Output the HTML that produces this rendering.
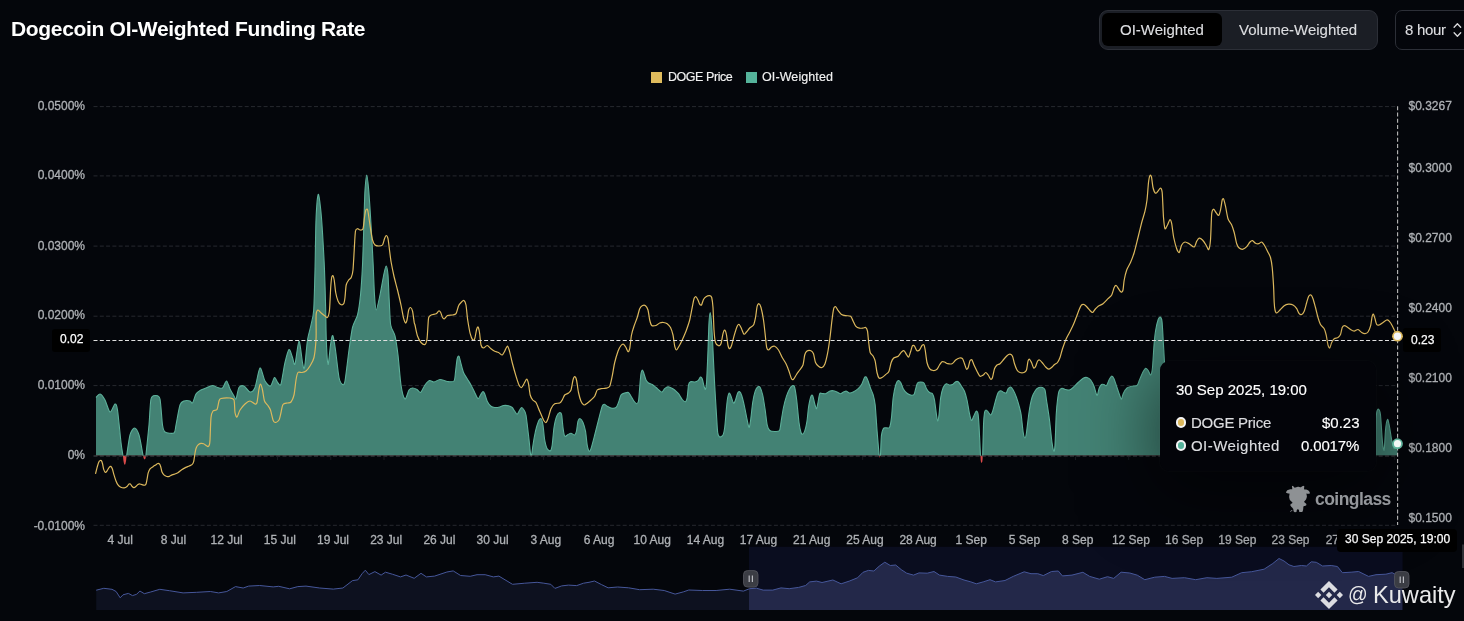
<!DOCTYPE html>
<html><head><meta charset="utf-8"><title>Dogecoin OI-Weighted Funding Rate</title>
<style>
html,body{margin:0;padding:0;background:#04060b;}
body{width:1464px;height:621px;overflow:hidden;position:relative;font-family:"Liberation Sans",sans-serif;}
svg text{font-family:"Liberation Sans",sans-serif;stroke:#aeb1b5;stroke-width:0.3px;}
.abs{position:absolute;white-space:nowrap;will-change:transform;}
#title{left:11px;top:17px;font-size:21px;line-height:24px;font-weight:bold;color:#fff;letter-spacing:-0.32px;}
#tg{left:1099px;top:10px;width:277px;height:37.5px;border:1px solid #2c2f37;border-radius:9px;background:#1b1e25;}
#tga{left:1102px;top:13px;width:119.5px;height:32.5px;border-radius:6px;background:#000;}
.tgt{top:19.6px;font-size:15px;line-height:19px;color:#dddee1;-webkit-text-stroke:0.12px #dddee1;margin-left:-0.4px;}
#dd{left:1395px;top:10px;width:80px;height:37.5px;border:1px solid #2c2f37;border-radius:7px;background:#04060b;}
.lg{top:70.3px;font-size:12.5px;line-height:15px;color:#f2f2f2;-webkit-text-stroke:0.15px #f2f2f2;}
.sq{position:absolute;top:72px;width:11px;height:11px;}
#pl{left:52px;top:329px;width:38px;height:23px;border-radius:3px;background:#000;}
#pr{left:1403px;top:328px;width:38px;height:24px;border-radius:3px;background:#000;}
.pt{font-size:12px;line-height:14px;color:#fff;-webkit-text-stroke:0.25px #fff;letter-spacing:0px;}
#pb{left:1337px;top:529px;width:120px;height:23px;border-radius:4px;background:#000;}
#tip{left:1160px;top:361px;width:215.5px;height:110px;border-radius:9px;background:#030409;box-shadow:0 0 0 1px rgba(255,255,255,0.012), 0 18px 70px 8px rgba(0,0,0,0.5);}
.tt{font-size:15px;line-height:18px;color:#fff;-webkit-text-stroke:0.15px #fff;}
.tl{font-size:15px;line-height:18px;color:#dcdde0;-webkit-text-stroke:0.15px #dcdde0;}
.dot{position:absolute;width:6.6px;height:6.6px;border-radius:50%;border:2px solid #f4f4f4;}
#cg{left:1315px;top:487.5px;font-size:17.5px;line-height:22px;font-weight:bold;color:#94979b;letter-spacing:-0.55px;}
#wm{left:1348px;top:580.8px;font-size:23.6px;line-height:28px;color:#e9e9ea;}
</style></head><body>
<svg width="1464" height="621" viewBox="0 0 1464 621" style="position:absolute;left:0;top:0;will-change:transform">
<defs><clipPath id="cpos"><rect x="90" y="100" width="1320" height="355.8"/></clipPath><clipPath id="cneg"><rect x="90" y="455.8" width="1320" height="60"/></clipPath>
<clipPath id="csel"><rect x="749" y="546.8" width="653.6" height="63.1"/></clipPath>
<linearGradient id="tsh" x1="0" x2="1" y1="0" y2="0"><stop offset="0" stop-color="#000" stop-opacity="0"/><stop offset="1" stop-color="#000" stop-opacity="0.22"/></linearGradient>
</defs>
<line x1="93.5" x2="1397.5" y1="106.6" y2="106.6" stroke="#27292f" stroke-width="1" stroke-dasharray="4 2.3"/>
<line x1="93.5" x2="1397.5" y1="175.9" y2="175.9" stroke="#27292f" stroke-width="1" stroke-dasharray="4 2.3"/>
<line x1="93.5" x2="1397.5" y1="246.1" y2="246.1" stroke="#27292f" stroke-width="1" stroke-dasharray="4 2.3"/>
<line x1="93.5" x2="1397.5" y1="316.2" y2="316.2" stroke="#27292f" stroke-width="1" stroke-dasharray="4 2.3"/>
<line x1="93.5" x2="1397.5" y1="385.6" y2="385.6" stroke="#27292f" stroke-width="1" stroke-dasharray="4 2.3"/>
<line x1="93.5" x2="1397.5" y1="525.3" y2="525.3" stroke="#27292f" stroke-width="1" stroke-dasharray="4 2.3"/>
<g clip-path="url(#cpos)"><path d="M96.0 397.5C96.5 397.0 98.8 393.7 100.0 394.0C101.2 394.3 103.7 397.6 105.0 400.0C106.3 402.4 108.7 411.5 110.0 412.0C111.3 412.5 114.0 404.3 115.0 404.0C116.0 403.7 116.7 404.9 117.5 410.0C118.3 415.1 120.3 436.4 121.0 442.5C121.7 448.6 122.6 453.0 122.9 455.5C123.2 458.0 123.3 459.8 123.5 461.0C123.7 462.2 124.1 464.2 124.4 464.6C124.7 465.0 125.2 464.6 125.4 464.0C125.6 463.4 126.0 461.1 126.2 460.0C126.4 458.9 126.2 458.8 126.7 455.5C127.2 452.2 129.0 438.7 130.0 435.0C131.0 431.3 133.3 428.0 134.5 428.0C135.7 428.0 137.9 431.7 139.0 435.0C140.1 438.3 142.0 449.8 142.5 452.5C143.0 455.2 142.9 454.7 143.1 455.5C143.3 456.3 143.6 458.1 143.8 458.6C144.0 459.1 144.4 459.4 144.6 459.4C144.8 459.4 145.2 458.9 145.4 458.4C145.6 457.9 145.4 460.0 145.9 455.5C146.4 451.0 148.3 432.5 149.0 425.0C149.7 417.5 150.1 402.9 151.0 399.0C151.9 395.1 154.3 395.5 155.5 395.5C156.7 395.5 159.1 395.1 160.0 399.0C160.9 402.9 161.8 420.6 162.5 425.0C163.2 429.4 163.5 430.9 165.0 432.0C166.5 433.1 172.5 433.9 174.0 433.0C175.5 432.1 175.2 428.7 176.0 425.0C176.8 421.3 178.9 408.2 180.0 405.0C181.1 401.8 182.7 401.5 184.0 401.0C185.3 400.5 188.9 400.7 190.0 401.0C191.1 401.3 191.7 403.9 192.5 403.0C193.3 402.1 195.0 395.7 196.0 394.0C197.0 392.3 198.7 391.3 200.0 390.5C201.3 389.7 204.3 388.7 206.0 388.0C207.7 387.3 211.0 385.6 212.5 385.5C214.0 385.4 216.2 387.2 217.5 387.5C218.8 387.8 221.3 388.9 222.5 388.0C223.7 387.1 225.5 380.9 226.5 381.0C227.5 381.1 229.0 387.0 230.0 389.0C231.0 391.0 233.2 394.7 234.0 396.0C234.8 397.3 235.3 400.1 236.0 399.0C236.7 397.9 237.9 389.2 239.0 387.5C240.1 385.8 242.5 385.4 244.0 386.0C245.5 386.6 248.5 391.8 250.0 392.0C251.5 392.2 253.7 390.7 255.0 387.5C256.3 384.3 258.7 368.9 260.0 368.0C261.3 367.1 263.6 378.6 265.0 381.0C266.4 383.4 269.2 386.5 270.5 386.0C271.8 385.5 273.5 377.9 274.5 377.5C275.5 377.1 277.1 382.1 278.0 383.0C278.9 383.9 280.1 386.7 281.0 384.0C281.9 381.3 283.9 367.1 285.0 362.5C286.1 357.9 288.0 350.2 289.0 349.5C290.0 348.8 291.7 355.6 292.5 357.5C293.3 359.4 294.1 366.2 295.0 364.0C295.9 361.8 298.0 341.2 299.0 341.0C300.0 340.8 301.8 358.9 302.5 362.5C303.2 366.1 303.8 371.0 304.5 368.0C305.2 365.0 306.6 345.7 307.5 340.0C308.4 334.3 310.2 329.0 311.0 325.0C311.8 321.0 313.2 317.3 313.7 310.0C314.2 302.7 314.7 282.0 315.0 270.0C315.3 258.0 315.6 230.1 316.0 220.0C316.4 209.9 317.6 196.2 318.2 194.5C318.8 192.8 319.9 202.4 320.5 207.5C321.1 212.6 322.0 224.2 322.5 232.5C323.0 240.8 324.1 259.7 324.5 270.0C324.9 280.3 325.5 300.7 325.7 310.0C325.9 319.3 326.0 332.7 326.3 340.0C326.6 347.3 327.4 363.8 328.0 364.5C328.6 365.2 329.9 348.9 330.5 345.0C331.1 341.1 332.0 334.8 332.7 335.5C333.4 336.2 334.7 344.4 335.5 350.0C336.3 355.6 338.1 372.9 339.0 377.5C339.9 382.1 341.7 384.0 342.5 384.5C343.3 385.0 344.1 385.6 345.0 381.0C345.9 376.4 348.0 357.1 349.0 350.0C350.0 342.9 351.4 332.2 352.5 327.5C353.6 322.8 356.4 319.3 357.5 315.0C358.6 310.7 359.8 301.7 360.5 295.0C361.2 288.3 362.0 275.0 362.5 265.0C363.0 255.0 363.7 230.0 364.0 220.0C364.3 210.0 364.6 196.0 365.0 190.0C365.4 184.0 366.2 175.0 366.7 175.0C367.2 175.0 368.1 183.0 368.7 190.0C369.3 197.0 370.6 217.5 371.2 227.5C371.8 237.5 372.8 256.0 373.2 265.0C373.6 274.0 374.1 289.0 374.5 295.0C374.9 301.0 375.5 310.0 376.2 310.0C376.9 310.0 379.0 299.7 380.0 295.0C381.0 290.3 382.9 278.9 383.7 275.0C384.5 271.1 385.6 266.0 386.2 266.0C386.8 266.0 387.6 270.5 388.0 275.0C388.4 279.5 388.8 293.3 389.2 300.0C389.6 306.7 389.9 320.2 390.7 325.0C391.5 329.8 394.0 332.0 395.0 336.0C396.0 340.0 397.2 348.5 398.0 355.0C398.8 361.5 400.1 379.1 401.0 385.0C401.9 390.9 403.9 398.3 405.0 399.0C406.1 399.7 408.0 391.5 409.0 390.0C410.0 388.5 411.4 388.1 412.5 388.0C413.6 387.9 415.9 388.9 417.0 389.5C418.1 390.1 419.4 393.1 420.5 392.5C421.6 391.9 423.8 386.6 425.0 385.0C426.2 383.4 428.3 380.9 429.5 380.5C430.7 380.1 432.6 382.1 434.0 382.0C435.4 381.9 438.2 379.6 440.0 379.5C441.8 379.4 445.6 381.3 447.5 381.5C449.4 381.7 452.9 382.3 454.0 381.0C455.1 379.7 455.1 375.0 455.5 372.0C455.9 369.0 456.7 360.8 457.2 358.7C457.7 356.6 458.5 355.5 459.0 356.2C459.5 356.9 460.4 361.5 461.0 363.7C461.6 365.9 462.7 370.5 463.5 372.5C464.3 374.5 466.2 377.0 467.2 378.7C468.2 380.4 470.0 383.2 471.0 385.0C472.0 386.8 473.8 390.7 474.7 392.5C475.6 394.3 477.2 398.4 478.0 398.7C478.8 399.0 479.9 395.9 480.5 395.0C481.1 394.1 482.1 391.9 482.7 391.7C483.3 391.5 484.1 392.4 484.7 393.7C485.3 395.0 486.4 399.5 487.2 401.2C488.0 402.9 490.0 405.4 491.0 406.2C492.0 407.0 493.5 407.4 494.7 407.5C495.9 407.6 498.5 407.3 499.7 407.0C500.9 406.7 502.3 405.7 503.5 405.5C504.7 405.3 507.3 405.4 508.5 405.7C509.7 406.0 511.4 406.8 512.2 407.5C513.0 408.2 514.0 410.3 514.7 411.2C515.4 412.1 516.5 414.4 517.2 414.2C517.9 414.0 519.1 410.9 519.7 410.0C520.3 409.1 521.1 407.5 521.7 407.5C522.3 407.5 523.4 409.0 524.0 410.0C524.6 411.0 525.4 411.7 526.0 415.0C526.6 418.3 527.9 430.2 528.5 435.0C529.1 439.8 529.9 448.5 530.2 451.2C530.5 453.9 530.7 454.9 530.8 455.6C530.9 456.3 531.1 456.8 531.2 456.8C531.3 456.8 531.4 457.2 531.6 455.6C531.8 454.0 532.5 448.3 533.0 445.0C533.5 441.7 534.8 434.4 535.5 431.2C536.2 428.0 537.8 422.9 538.5 421.2C539.2 419.5 540.4 418.2 541.0 418.7C541.6 419.2 542.5 422.2 543.0 425.0C543.5 427.8 544.1 436.8 544.7 440.0C545.3 443.2 546.4 447.3 547.2 448.7C548.0 450.1 549.8 451.2 550.5 450.7C551.2 450.2 551.7 448.1 552.2 445.0C552.7 441.9 553.4 431.3 554.0 427.5C554.6 423.7 555.9 418.2 556.7 416.2C557.5 414.2 559.0 412.7 559.7 412.5C560.4 412.3 561.3 413.0 561.7 415.0C562.1 417.0 562.6 424.7 563.0 427.5C563.4 430.3 564.0 435.3 564.7 436.2C565.4 437.1 567.2 434.9 568.0 434.5C568.8 434.1 570.1 433.1 571.0 433.2C571.9 433.3 574.0 435.3 574.7 435.0C575.4 434.7 576.1 433.0 576.5 431.2C576.9 429.4 577.5 422.9 578.0 421.2C578.5 419.5 579.5 418.5 580.2 418.7C580.9 418.9 582.3 420.8 583.0 422.5C583.7 424.2 584.9 428.2 585.5 431.2C586.1 434.2 586.7 442.3 587.2 445.0C587.7 447.7 588.7 450.7 589.2 451.2C589.7 451.7 590.3 450.9 591.0 448.7C591.7 446.5 593.7 438.8 594.7 435.0C595.7 431.2 597.5 423.8 598.5 420.0C599.5 416.2 601.4 408.3 602.2 406.2C603.0 404.1 603.5 404.2 604.2 404.2C604.9 404.2 606.3 405.7 607.2 406.2C608.1 406.7 609.8 407.8 611.0 408.0C612.2 408.2 615.0 408.2 616.0 407.5C617.0 406.8 617.8 404.2 618.5 402.5C619.2 400.8 620.2 396.3 621.0 395.0C621.8 393.7 623.7 393.3 624.7 393.0C625.7 392.7 627.7 392.1 628.5 392.5C629.3 392.9 630.3 395.1 631.0 396.2C631.7 397.3 632.8 399.5 633.5 400.5C634.2 401.5 635.8 403.6 636.5 403.7C637.2 403.8 638.1 403.4 638.5 401.2C638.9 399.0 639.4 391.2 639.7 387.5C640.0 383.8 640.6 376.0 641.0 373.7C641.4 371.4 642.1 370.0 642.5 370.0C642.9 370.0 643.5 372.4 644.0 373.7C644.5 375.0 645.4 378.8 646.0 380.0C646.6 381.2 647.7 382.4 648.5 383.0C649.3 383.6 651.2 383.9 652.2 384.5C653.2 385.1 655.0 386.7 656.0 387.5C657.0 388.3 658.9 390.1 659.7 390.7C660.5 391.3 661.5 392.3 662.2 392.0C662.9 391.7 663.9 389.4 664.7 388.7C665.5 388.0 667.1 386.8 668.0 386.7C668.9 386.6 670.6 387.6 671.5 388.0C672.4 388.4 673.8 389.2 674.7 390.0C675.6 390.8 677.5 392.4 678.5 393.7C679.5 395.0 681.3 398.4 682.2 399.5C683.1 400.6 684.8 402.0 685.5 401.7C686.2 401.4 686.8 399.7 687.2 397.5C687.6 395.3 688.1 387.1 688.5 385.0C688.9 382.9 689.7 382.1 690.5 381.7C691.3 381.3 693.7 382.1 694.7 382.0C695.7 381.9 697.2 381.4 698.0 380.7C698.8 380.0 699.9 377.3 700.5 377.0C701.1 376.7 701.7 377.5 702.2 378.7C702.7 379.9 703.6 384.8 704.0 386.2C704.4 387.6 705.1 390.0 705.5 389.2C705.9 388.4 706.4 385.2 706.7 380.0C707.0 374.8 707.7 357.7 708.0 350.0C708.3 342.3 708.7 327.5 709.0 322.5C709.3 317.5 709.9 312.5 710.2 312.5C710.5 312.5 711.1 317.5 711.5 322.5C711.9 327.5 712.6 341.7 713.0 350.0C713.4 358.3 714.2 376.3 714.7 385.0C715.2 393.7 716.1 408.7 716.5 415.0C716.9 421.3 717.3 429.6 717.7 432.5C718.1 435.4 719.0 436.7 719.7 437.0C720.4 437.3 722.3 436.3 723.0 435.0C723.7 433.7 724.2 431.2 724.7 427.5C725.2 423.8 726.1 411.5 726.5 407.5C726.9 403.5 727.3 399.4 727.7 397.5C728.1 395.6 728.8 393.2 729.2 393.0C729.6 392.8 730.4 394.8 731.0 396.2C731.6 397.6 732.9 402.7 733.5 403.2C734.1 403.7 734.9 401.4 735.5 400.0C736.1 398.6 737.1 394.1 737.7 393.0C738.3 391.9 739.2 391.4 739.7 391.7C740.2 392.0 741.0 393.4 741.7 395.5C742.4 397.6 744.0 404.2 744.7 407.5C745.4 410.8 746.6 417.3 747.2 420.0C747.8 422.7 748.6 427.4 749.0 427.5C749.4 427.6 750.0 424.3 750.5 421.0C751.0 417.7 752.1 406.5 752.7 402.5C753.3 398.5 754.5 393.3 755.2 391.2C755.9 389.1 757.3 387.2 758.0 386.7C758.7 386.2 759.6 386.4 760.2 387.5C760.8 388.6 762.0 392.0 762.7 395.0C763.4 398.0 764.6 406.0 765.2 410.0C765.8 414.0 766.6 422.3 767.2 425.0C767.8 427.7 768.7 429.6 769.7 430.5C770.7 431.4 773.4 431.5 774.7 431.5C776.0 431.5 778.6 431.9 779.5 430.5C780.4 429.1 780.7 424.1 781.2 421.0C781.7 417.9 782.8 410.8 783.5 407.5C784.2 404.2 785.7 398.7 786.5 396.2C787.3 393.7 788.9 390.1 789.7 388.7C790.5 387.3 792.0 385.7 792.7 385.5C793.4 385.3 794.2 385.6 794.7 387.5C795.2 389.4 796.1 395.3 796.7 400.0C797.3 404.7 798.4 418.2 799.0 422.5C799.6 426.8 800.5 430.9 801.0 432.5C801.5 434.1 802.2 434.4 802.7 434.2C803.2 434.0 804.1 433.0 804.7 431.2C805.3 429.4 806.5 424.2 807.0 421.0C807.5 417.8 808.0 410.8 808.5 407.5C809.0 404.2 810.4 397.8 811.0 396.2C811.6 394.6 812.2 394.7 812.7 395.7C813.2 396.7 814.2 402.0 814.7 403.7C815.2 405.4 816.1 408.9 816.5 408.7C816.9 408.5 817.6 404.5 818.0 402.5C818.4 400.5 819.2 394.9 819.7 393.7C820.2 392.5 821.2 393.5 822.0 393.5C822.8 393.5 824.7 394.0 825.7 393.7C826.7 393.4 828.5 391.6 829.5 391.2C830.5 390.8 832.2 390.6 833.2 390.7C834.2 390.8 836.0 391.6 837.0 392.0C838.0 392.4 839.8 393.7 840.7 393.7C841.6 393.7 843.2 392.0 844.0 391.7C844.8 391.4 845.8 391.0 846.5 391.2C847.2 391.4 848.6 392.9 849.5 393.0C850.4 393.1 852.0 392.6 853.2 392.0C854.4 391.4 857.0 389.8 858.2 388.7C859.4 387.6 861.2 385.2 862.0 383.7C862.8 382.2 863.9 378.4 864.5 377.5C865.1 376.6 865.7 376.5 866.2 377.0C866.7 377.5 867.6 379.6 868.2 381.2C868.8 382.8 870.0 386.9 870.7 388.7C871.4 390.5 872.6 392.8 873.2 395.0C873.8 397.2 874.7 400.3 875.2 405.0C875.7 409.7 876.5 423.5 877.0 430.0C877.5 436.5 878.7 450.2 879.0 453.7C879.3 457.2 879.2 455.5 879.3 456.0C879.4 456.5 879.7 457.8 879.8 457.8C879.9 457.8 880.2 456.6 880.3 456.0C880.4 455.4 880.4 455.8 880.6 453.0C880.8 450.2 881.0 438.3 881.5 435.0C882.0 431.7 882.9 429.0 884.0 428.0C885.1 427.0 888.5 428.9 889.5 427.5C890.5 426.1 891.0 421.5 891.5 417.5C892.0 413.5 892.6 401.8 893.2 397.5C893.8 393.2 895.0 387.3 895.7 385.0C896.4 382.7 897.5 380.8 898.2 380.5C898.9 380.2 900.0 381.4 900.7 382.5C901.4 383.6 902.4 387.3 903.2 388.7C904.0 390.1 906.0 392.4 907.0 393.2C908.0 394.0 909.8 394.8 910.7 395.0C911.6 395.2 913.3 395.3 914.0 394.5C914.7 393.7 915.2 390.2 915.7 388.7C916.2 387.2 916.8 383.9 917.5 383.0C918.2 382.1 919.8 382.0 920.7 382.0C921.6 382.0 923.2 382.1 924.0 383.0C924.8 383.9 925.8 387.4 926.5 388.7C927.2 390.0 928.7 391.8 929.5 392.5C930.3 393.2 931.8 392.7 932.5 393.7C933.2 394.7 934.0 397.2 934.5 400.0C935.0 402.8 936.1 412.2 936.5 415.0C936.9 417.8 937.4 421.2 937.7 421.2C938.0 421.2 938.6 418.2 939.0 415.0C939.4 411.8 940.1 401.2 940.7 397.5C941.3 393.8 942.5 389.3 943.2 387.5C943.9 385.7 945.4 384.0 946.2 383.7C947.0 383.4 948.7 384.9 949.5 385.0C950.3 385.1 951.7 384.9 952.5 384.5C953.3 384.1 954.9 382.1 955.7 381.7C956.5 381.3 957.4 381.1 958.2 381.7C959.0 382.3 960.7 384.9 961.5 386.2C962.3 387.5 963.8 389.4 964.5 391.2C965.2 393.0 966.3 397.0 967.0 400.0C967.7 403.0 968.9 411.0 969.5 413.7C970.1 416.4 970.9 420.2 971.5 420.5C972.1 420.8 973.1 417.4 973.7 416.2C974.3 415.0 975.6 411.5 976.2 411.2C976.8 410.9 977.6 411.9 978.0 413.7C978.4 415.5 978.7 420.2 979.0 425.0C979.3 429.8 980.0 445.9 980.2 450.0C980.4 454.1 980.4 454.5 980.5 456.0C980.6 457.5 980.7 460.1 980.8 461.0C980.9 461.9 981.4 462.9 981.6 462.9C981.8 462.9 982.3 461.9 982.4 461.0C982.5 460.1 982.6 460.8 982.7 456.0C982.8 451.2 983.3 430.8 983.5 425.0C983.7 419.2 984.2 414.5 984.5 412.5C984.8 410.5 985.5 410.1 986.0 410.0C986.5 409.9 987.6 411.3 988.2 412.0C988.8 412.7 990.1 415.1 990.7 415.0C991.3 414.9 992.0 413.2 992.7 411.2C993.4 409.2 995.0 402.5 995.7 400.0C996.4 397.5 997.5 393.7 998.2 392.5C998.9 391.3 999.9 390.7 1000.7 390.7C1001.5 390.7 1003.3 392.2 1004.0 392.5C1004.7 392.8 1005.6 393.5 1006.2 393.0C1006.8 392.5 1007.6 389.5 1008.2 388.7C1008.8 387.9 1010.0 386.8 1010.7 387.0C1011.4 387.2 1012.4 388.6 1013.2 390.0C1014.0 391.4 1015.7 395.2 1016.5 397.5C1017.3 399.8 1018.9 405.2 1019.5 407.5C1020.1 409.8 1020.7 411.7 1021.2 415.0C1021.7 418.3 1022.7 429.4 1023.2 432.5C1023.7 435.6 1024.6 438.0 1025.0 438.0C1025.4 438.0 1026.0 435.9 1026.5 432.5C1027.0 429.1 1028.3 417.2 1029.0 412.5C1029.7 407.8 1031.1 400.5 1032.0 397.5C1032.9 394.5 1034.8 391.3 1035.7 390.0C1036.6 388.7 1038.1 387.8 1039.0 387.5C1039.9 387.2 1041.7 387.2 1042.5 387.5C1043.3 387.8 1044.5 388.3 1045.0 390.0C1045.5 391.7 1045.9 396.0 1046.5 400.0C1047.1 404.0 1048.8 414.3 1049.5 420.0C1050.2 425.7 1051.4 438.3 1052.0 442.5C1052.6 446.7 1053.6 450.9 1054.0 451.2C1054.4 451.5 1054.7 449.8 1055.0 445.0C1055.3 440.2 1055.9 421.0 1056.2 415.0C1056.5 409.0 1057.1 403.2 1057.5 400.0C1057.9 396.8 1058.4 392.8 1059.0 391.2C1059.6 389.6 1061.1 388.4 1062.0 388.2C1062.9 388.0 1064.7 389.3 1065.7 389.5C1066.7 389.7 1068.5 390.3 1069.5 390.0C1070.5 389.7 1072.0 388.5 1073.2 387.5C1074.4 386.5 1076.9 383.7 1078.2 382.5C1079.5 381.3 1082.0 378.9 1083.2 378.2C1084.4 377.5 1086.0 377.3 1087.0 377.5C1088.0 377.7 1089.8 378.8 1090.7 380.0C1091.6 381.2 1093.3 384.4 1094.0 386.2C1094.7 388.0 1095.7 392.5 1096.2 393.7C1096.7 394.9 1097.1 395.7 1097.5 395.0C1097.9 394.3 1098.5 390.1 1099.0 388.7C1099.5 387.3 1100.8 385.1 1101.5 384.5C1102.2 383.9 1103.3 384.3 1104.0 384.5C1104.7 384.7 1105.8 386.3 1106.5 385.7C1107.2 385.1 1108.3 381.3 1109.0 380.0C1109.7 378.7 1110.8 376.4 1111.5 376.2C1112.2 376.0 1113.3 377.2 1114.0 378.7C1114.7 380.2 1116.2 385.2 1117.0 387.5C1117.8 389.8 1119.4 394.6 1120.0 396.2C1120.6 397.8 1121.1 399.5 1121.5 399.2C1121.9 398.9 1122.5 395.2 1123.2 393.7C1123.9 392.2 1125.8 389.0 1127.0 388.0C1128.2 387.0 1130.7 386.5 1132.0 386.2C1133.3 385.9 1136.0 386.3 1137.0 385.5C1138.0 384.7 1138.7 381.7 1139.5 380.0C1140.3 378.3 1141.9 374.1 1142.7 372.5C1143.5 370.9 1145.0 368.5 1145.7 368.2C1146.4 367.9 1147.5 369.6 1148.2 370.5C1148.9 371.4 1150.1 375.4 1150.7 375.0C1151.3 374.6 1152.1 371.5 1152.5 367.5C1152.9 363.5 1153.6 350.0 1154.0 345.0C1154.4 340.0 1155.1 333.4 1155.7 330.0C1156.3 326.6 1157.6 321.2 1158.2 319.5C1158.8 317.8 1159.7 316.8 1160.2 317.0C1160.7 317.2 1161.6 318.1 1162.0 321.2C1162.4 324.3 1162.9 334.5 1163.2 340.0C1163.5 345.5 1164.2 356.5 1164.5 362.5C1164.8 368.5 1165.2 377.3 1165.5 385.0C1165.8 392.7 1166.7 410.6 1167.0 420.0C1167.3 429.4 1167.9 450.8 1168.0 455.5L1168.0 455.5L96.0 455.5Z" fill="#438274"/><path d="M96.0 397.5C96.5 397.0 98.8 393.7 100.0 394.0C101.2 394.3 103.7 397.6 105.0 400.0C106.3 402.4 108.7 411.5 110.0 412.0C111.3 412.5 114.0 404.3 115.0 404.0C116.0 403.7 116.7 404.9 117.5 410.0C118.3 415.1 120.3 436.4 121.0 442.5C121.7 448.6 122.6 453.0 122.9 455.5C123.2 458.0 123.3 459.8 123.5 461.0C123.7 462.2 124.1 464.2 124.4 464.6C124.7 465.0 125.2 464.6 125.4 464.0C125.6 463.4 126.0 461.1 126.2 460.0C126.4 458.9 126.2 458.8 126.7 455.5C127.2 452.2 129.0 438.7 130.0 435.0C131.0 431.3 133.3 428.0 134.5 428.0C135.7 428.0 137.9 431.7 139.0 435.0C140.1 438.3 142.0 449.8 142.5 452.5C143.0 455.2 142.9 454.7 143.1 455.5C143.3 456.3 143.6 458.1 143.8 458.6C144.0 459.1 144.4 459.4 144.6 459.4C144.8 459.4 145.2 458.9 145.4 458.4C145.6 457.9 145.4 460.0 145.9 455.5C146.4 451.0 148.3 432.5 149.0 425.0C149.7 417.5 150.1 402.9 151.0 399.0C151.9 395.1 154.3 395.5 155.5 395.5C156.7 395.5 159.1 395.1 160.0 399.0C160.9 402.9 161.8 420.6 162.5 425.0C163.2 429.4 163.5 430.9 165.0 432.0C166.5 433.1 172.5 433.9 174.0 433.0C175.5 432.1 175.2 428.7 176.0 425.0C176.8 421.3 178.9 408.2 180.0 405.0C181.1 401.8 182.7 401.5 184.0 401.0C185.3 400.5 188.9 400.7 190.0 401.0C191.1 401.3 191.7 403.9 192.5 403.0C193.3 402.1 195.0 395.7 196.0 394.0C197.0 392.3 198.7 391.3 200.0 390.5C201.3 389.7 204.3 388.7 206.0 388.0C207.7 387.3 211.0 385.6 212.5 385.5C214.0 385.4 216.2 387.2 217.5 387.5C218.8 387.8 221.3 388.9 222.5 388.0C223.7 387.1 225.5 380.9 226.5 381.0C227.5 381.1 229.0 387.0 230.0 389.0C231.0 391.0 233.2 394.7 234.0 396.0C234.8 397.3 235.3 400.1 236.0 399.0C236.7 397.9 237.9 389.2 239.0 387.5C240.1 385.8 242.5 385.4 244.0 386.0C245.5 386.6 248.5 391.8 250.0 392.0C251.5 392.2 253.7 390.7 255.0 387.5C256.3 384.3 258.7 368.9 260.0 368.0C261.3 367.1 263.6 378.6 265.0 381.0C266.4 383.4 269.2 386.5 270.5 386.0C271.8 385.5 273.5 377.9 274.5 377.5C275.5 377.1 277.1 382.1 278.0 383.0C278.9 383.9 280.1 386.7 281.0 384.0C281.9 381.3 283.9 367.1 285.0 362.5C286.1 357.9 288.0 350.2 289.0 349.5C290.0 348.8 291.7 355.6 292.5 357.5C293.3 359.4 294.1 366.2 295.0 364.0C295.9 361.8 298.0 341.2 299.0 341.0C300.0 340.8 301.8 358.9 302.5 362.5C303.2 366.1 303.8 371.0 304.5 368.0C305.2 365.0 306.6 345.7 307.5 340.0C308.4 334.3 310.2 329.0 311.0 325.0C311.8 321.0 313.2 317.3 313.7 310.0C314.2 302.7 314.7 282.0 315.0 270.0C315.3 258.0 315.6 230.1 316.0 220.0C316.4 209.9 317.6 196.2 318.2 194.5C318.8 192.8 319.9 202.4 320.5 207.5C321.1 212.6 322.0 224.2 322.5 232.5C323.0 240.8 324.1 259.7 324.5 270.0C324.9 280.3 325.5 300.7 325.7 310.0C325.9 319.3 326.0 332.7 326.3 340.0C326.6 347.3 327.4 363.8 328.0 364.5C328.6 365.2 329.9 348.9 330.5 345.0C331.1 341.1 332.0 334.8 332.7 335.5C333.4 336.2 334.7 344.4 335.5 350.0C336.3 355.6 338.1 372.9 339.0 377.5C339.9 382.1 341.7 384.0 342.5 384.5C343.3 385.0 344.1 385.6 345.0 381.0C345.9 376.4 348.0 357.1 349.0 350.0C350.0 342.9 351.4 332.2 352.5 327.5C353.6 322.8 356.4 319.3 357.5 315.0C358.6 310.7 359.8 301.7 360.5 295.0C361.2 288.3 362.0 275.0 362.5 265.0C363.0 255.0 363.7 230.0 364.0 220.0C364.3 210.0 364.6 196.0 365.0 190.0C365.4 184.0 366.2 175.0 366.7 175.0C367.2 175.0 368.1 183.0 368.7 190.0C369.3 197.0 370.6 217.5 371.2 227.5C371.8 237.5 372.8 256.0 373.2 265.0C373.6 274.0 374.1 289.0 374.5 295.0C374.9 301.0 375.5 310.0 376.2 310.0C376.9 310.0 379.0 299.7 380.0 295.0C381.0 290.3 382.9 278.9 383.7 275.0C384.5 271.1 385.6 266.0 386.2 266.0C386.8 266.0 387.6 270.5 388.0 275.0C388.4 279.5 388.8 293.3 389.2 300.0C389.6 306.7 389.9 320.2 390.7 325.0C391.5 329.8 394.0 332.0 395.0 336.0C396.0 340.0 397.2 348.5 398.0 355.0C398.8 361.5 400.1 379.1 401.0 385.0C401.9 390.9 403.9 398.3 405.0 399.0C406.1 399.7 408.0 391.5 409.0 390.0C410.0 388.5 411.4 388.1 412.5 388.0C413.6 387.9 415.9 388.9 417.0 389.5C418.1 390.1 419.4 393.1 420.5 392.5C421.6 391.9 423.8 386.6 425.0 385.0C426.2 383.4 428.3 380.9 429.5 380.5C430.7 380.1 432.6 382.1 434.0 382.0C435.4 381.9 438.2 379.6 440.0 379.5C441.8 379.4 445.6 381.3 447.5 381.5C449.4 381.7 452.9 382.3 454.0 381.0C455.1 379.7 455.1 375.0 455.5 372.0C455.9 369.0 456.7 360.8 457.2 358.7C457.7 356.6 458.5 355.5 459.0 356.2C459.5 356.9 460.4 361.5 461.0 363.7C461.6 365.9 462.7 370.5 463.5 372.5C464.3 374.5 466.2 377.0 467.2 378.7C468.2 380.4 470.0 383.2 471.0 385.0C472.0 386.8 473.8 390.7 474.7 392.5C475.6 394.3 477.2 398.4 478.0 398.7C478.8 399.0 479.9 395.9 480.5 395.0C481.1 394.1 482.1 391.9 482.7 391.7C483.3 391.5 484.1 392.4 484.7 393.7C485.3 395.0 486.4 399.5 487.2 401.2C488.0 402.9 490.0 405.4 491.0 406.2C492.0 407.0 493.5 407.4 494.7 407.5C495.9 407.6 498.5 407.3 499.7 407.0C500.9 406.7 502.3 405.7 503.5 405.5C504.7 405.3 507.3 405.4 508.5 405.7C509.7 406.0 511.4 406.8 512.2 407.5C513.0 408.2 514.0 410.3 514.7 411.2C515.4 412.1 516.5 414.4 517.2 414.2C517.9 414.0 519.1 410.9 519.7 410.0C520.3 409.1 521.1 407.5 521.7 407.5C522.3 407.5 523.4 409.0 524.0 410.0C524.6 411.0 525.4 411.7 526.0 415.0C526.6 418.3 527.9 430.2 528.5 435.0C529.1 439.8 529.9 448.5 530.2 451.2C530.5 453.9 530.7 454.9 530.8 455.6C530.9 456.3 531.1 456.8 531.2 456.8C531.3 456.8 531.4 457.2 531.6 455.6C531.8 454.0 532.5 448.3 533.0 445.0C533.5 441.7 534.8 434.4 535.5 431.2C536.2 428.0 537.8 422.9 538.5 421.2C539.2 419.5 540.4 418.2 541.0 418.7C541.6 419.2 542.5 422.2 543.0 425.0C543.5 427.8 544.1 436.8 544.7 440.0C545.3 443.2 546.4 447.3 547.2 448.7C548.0 450.1 549.8 451.2 550.5 450.7C551.2 450.2 551.7 448.1 552.2 445.0C552.7 441.9 553.4 431.3 554.0 427.5C554.6 423.7 555.9 418.2 556.7 416.2C557.5 414.2 559.0 412.7 559.7 412.5C560.4 412.3 561.3 413.0 561.7 415.0C562.1 417.0 562.6 424.7 563.0 427.5C563.4 430.3 564.0 435.3 564.7 436.2C565.4 437.1 567.2 434.9 568.0 434.5C568.8 434.1 570.1 433.1 571.0 433.2C571.9 433.3 574.0 435.3 574.7 435.0C575.4 434.7 576.1 433.0 576.5 431.2C576.9 429.4 577.5 422.9 578.0 421.2C578.5 419.5 579.5 418.5 580.2 418.7C580.9 418.9 582.3 420.8 583.0 422.5C583.7 424.2 584.9 428.2 585.5 431.2C586.1 434.2 586.7 442.3 587.2 445.0C587.7 447.7 588.7 450.7 589.2 451.2C589.7 451.7 590.3 450.9 591.0 448.7C591.7 446.5 593.7 438.8 594.7 435.0C595.7 431.2 597.5 423.8 598.5 420.0C599.5 416.2 601.4 408.3 602.2 406.2C603.0 404.1 603.5 404.2 604.2 404.2C604.9 404.2 606.3 405.7 607.2 406.2C608.1 406.7 609.8 407.8 611.0 408.0C612.2 408.2 615.0 408.2 616.0 407.5C617.0 406.8 617.8 404.2 618.5 402.5C619.2 400.8 620.2 396.3 621.0 395.0C621.8 393.7 623.7 393.3 624.7 393.0C625.7 392.7 627.7 392.1 628.5 392.5C629.3 392.9 630.3 395.1 631.0 396.2C631.7 397.3 632.8 399.5 633.5 400.5C634.2 401.5 635.8 403.6 636.5 403.7C637.2 403.8 638.1 403.4 638.5 401.2C638.9 399.0 639.4 391.2 639.7 387.5C640.0 383.8 640.6 376.0 641.0 373.7C641.4 371.4 642.1 370.0 642.5 370.0C642.9 370.0 643.5 372.4 644.0 373.7C644.5 375.0 645.4 378.8 646.0 380.0C646.6 381.2 647.7 382.4 648.5 383.0C649.3 383.6 651.2 383.9 652.2 384.5C653.2 385.1 655.0 386.7 656.0 387.5C657.0 388.3 658.9 390.1 659.7 390.7C660.5 391.3 661.5 392.3 662.2 392.0C662.9 391.7 663.9 389.4 664.7 388.7C665.5 388.0 667.1 386.8 668.0 386.7C668.9 386.6 670.6 387.6 671.5 388.0C672.4 388.4 673.8 389.2 674.7 390.0C675.6 390.8 677.5 392.4 678.5 393.7C679.5 395.0 681.3 398.4 682.2 399.5C683.1 400.6 684.8 402.0 685.5 401.7C686.2 401.4 686.8 399.7 687.2 397.5C687.6 395.3 688.1 387.1 688.5 385.0C688.9 382.9 689.7 382.1 690.5 381.7C691.3 381.3 693.7 382.1 694.7 382.0C695.7 381.9 697.2 381.4 698.0 380.7C698.8 380.0 699.9 377.3 700.5 377.0C701.1 376.7 701.7 377.5 702.2 378.7C702.7 379.9 703.6 384.8 704.0 386.2C704.4 387.6 705.1 390.0 705.5 389.2C705.9 388.4 706.4 385.2 706.7 380.0C707.0 374.8 707.7 357.7 708.0 350.0C708.3 342.3 708.7 327.5 709.0 322.5C709.3 317.5 709.9 312.5 710.2 312.5C710.5 312.5 711.1 317.5 711.5 322.5C711.9 327.5 712.6 341.7 713.0 350.0C713.4 358.3 714.2 376.3 714.7 385.0C715.2 393.7 716.1 408.7 716.5 415.0C716.9 421.3 717.3 429.6 717.7 432.5C718.1 435.4 719.0 436.7 719.7 437.0C720.4 437.3 722.3 436.3 723.0 435.0C723.7 433.7 724.2 431.2 724.7 427.5C725.2 423.8 726.1 411.5 726.5 407.5C726.9 403.5 727.3 399.4 727.7 397.5C728.1 395.6 728.8 393.2 729.2 393.0C729.6 392.8 730.4 394.8 731.0 396.2C731.6 397.6 732.9 402.7 733.5 403.2C734.1 403.7 734.9 401.4 735.5 400.0C736.1 398.6 737.1 394.1 737.7 393.0C738.3 391.9 739.2 391.4 739.7 391.7C740.2 392.0 741.0 393.4 741.7 395.5C742.4 397.6 744.0 404.2 744.7 407.5C745.4 410.8 746.6 417.3 747.2 420.0C747.8 422.7 748.6 427.4 749.0 427.5C749.4 427.6 750.0 424.3 750.5 421.0C751.0 417.7 752.1 406.5 752.7 402.5C753.3 398.5 754.5 393.3 755.2 391.2C755.9 389.1 757.3 387.2 758.0 386.7C758.7 386.2 759.6 386.4 760.2 387.5C760.8 388.6 762.0 392.0 762.7 395.0C763.4 398.0 764.6 406.0 765.2 410.0C765.8 414.0 766.6 422.3 767.2 425.0C767.8 427.7 768.7 429.6 769.7 430.5C770.7 431.4 773.4 431.5 774.7 431.5C776.0 431.5 778.6 431.9 779.5 430.5C780.4 429.1 780.7 424.1 781.2 421.0C781.7 417.9 782.8 410.8 783.5 407.5C784.2 404.2 785.7 398.7 786.5 396.2C787.3 393.7 788.9 390.1 789.7 388.7C790.5 387.3 792.0 385.7 792.7 385.5C793.4 385.3 794.2 385.6 794.7 387.5C795.2 389.4 796.1 395.3 796.7 400.0C797.3 404.7 798.4 418.2 799.0 422.5C799.6 426.8 800.5 430.9 801.0 432.5C801.5 434.1 802.2 434.4 802.7 434.2C803.2 434.0 804.1 433.0 804.7 431.2C805.3 429.4 806.5 424.2 807.0 421.0C807.5 417.8 808.0 410.8 808.5 407.5C809.0 404.2 810.4 397.8 811.0 396.2C811.6 394.6 812.2 394.7 812.7 395.7C813.2 396.7 814.2 402.0 814.7 403.7C815.2 405.4 816.1 408.9 816.5 408.7C816.9 408.5 817.6 404.5 818.0 402.5C818.4 400.5 819.2 394.9 819.7 393.7C820.2 392.5 821.2 393.5 822.0 393.5C822.8 393.5 824.7 394.0 825.7 393.7C826.7 393.4 828.5 391.6 829.5 391.2C830.5 390.8 832.2 390.6 833.2 390.7C834.2 390.8 836.0 391.6 837.0 392.0C838.0 392.4 839.8 393.7 840.7 393.7C841.6 393.7 843.2 392.0 844.0 391.7C844.8 391.4 845.8 391.0 846.5 391.2C847.2 391.4 848.6 392.9 849.5 393.0C850.4 393.1 852.0 392.6 853.2 392.0C854.4 391.4 857.0 389.8 858.2 388.7C859.4 387.6 861.2 385.2 862.0 383.7C862.8 382.2 863.9 378.4 864.5 377.5C865.1 376.6 865.7 376.5 866.2 377.0C866.7 377.5 867.6 379.6 868.2 381.2C868.8 382.8 870.0 386.9 870.7 388.7C871.4 390.5 872.6 392.8 873.2 395.0C873.8 397.2 874.7 400.3 875.2 405.0C875.7 409.7 876.5 423.5 877.0 430.0C877.5 436.5 878.7 450.2 879.0 453.7C879.3 457.2 879.2 455.5 879.3 456.0C879.4 456.5 879.7 457.8 879.8 457.8C879.9 457.8 880.2 456.6 880.3 456.0C880.4 455.4 880.4 455.8 880.6 453.0C880.8 450.2 881.0 438.3 881.5 435.0C882.0 431.7 882.9 429.0 884.0 428.0C885.1 427.0 888.5 428.9 889.5 427.5C890.5 426.1 891.0 421.5 891.5 417.5C892.0 413.5 892.6 401.8 893.2 397.5C893.8 393.2 895.0 387.3 895.7 385.0C896.4 382.7 897.5 380.8 898.2 380.5C898.9 380.2 900.0 381.4 900.7 382.5C901.4 383.6 902.4 387.3 903.2 388.7C904.0 390.1 906.0 392.4 907.0 393.2C908.0 394.0 909.8 394.8 910.7 395.0C911.6 395.2 913.3 395.3 914.0 394.5C914.7 393.7 915.2 390.2 915.7 388.7C916.2 387.2 916.8 383.9 917.5 383.0C918.2 382.1 919.8 382.0 920.7 382.0C921.6 382.0 923.2 382.1 924.0 383.0C924.8 383.9 925.8 387.4 926.5 388.7C927.2 390.0 928.7 391.8 929.5 392.5C930.3 393.2 931.8 392.7 932.5 393.7C933.2 394.7 934.0 397.2 934.5 400.0C935.0 402.8 936.1 412.2 936.5 415.0C936.9 417.8 937.4 421.2 937.7 421.2C938.0 421.2 938.6 418.2 939.0 415.0C939.4 411.8 940.1 401.2 940.7 397.5C941.3 393.8 942.5 389.3 943.2 387.5C943.9 385.7 945.4 384.0 946.2 383.7C947.0 383.4 948.7 384.9 949.5 385.0C950.3 385.1 951.7 384.9 952.5 384.5C953.3 384.1 954.9 382.1 955.7 381.7C956.5 381.3 957.4 381.1 958.2 381.7C959.0 382.3 960.7 384.9 961.5 386.2C962.3 387.5 963.8 389.4 964.5 391.2C965.2 393.0 966.3 397.0 967.0 400.0C967.7 403.0 968.9 411.0 969.5 413.7C970.1 416.4 970.9 420.2 971.5 420.5C972.1 420.8 973.1 417.4 973.7 416.2C974.3 415.0 975.6 411.5 976.2 411.2C976.8 410.9 977.6 411.9 978.0 413.7C978.4 415.5 978.7 420.2 979.0 425.0C979.3 429.8 980.0 445.9 980.2 450.0C980.4 454.1 980.4 454.5 980.5 456.0C980.6 457.5 980.7 460.1 980.8 461.0C980.9 461.9 981.4 462.9 981.6 462.9C981.8 462.9 982.3 461.9 982.4 461.0C982.5 460.1 982.6 460.8 982.7 456.0C982.8 451.2 983.3 430.8 983.5 425.0C983.7 419.2 984.2 414.5 984.5 412.5C984.8 410.5 985.5 410.1 986.0 410.0C986.5 409.9 987.6 411.3 988.2 412.0C988.8 412.7 990.1 415.1 990.7 415.0C991.3 414.9 992.0 413.2 992.7 411.2C993.4 409.2 995.0 402.5 995.7 400.0C996.4 397.5 997.5 393.7 998.2 392.5C998.9 391.3 999.9 390.7 1000.7 390.7C1001.5 390.7 1003.3 392.2 1004.0 392.5C1004.7 392.8 1005.6 393.5 1006.2 393.0C1006.8 392.5 1007.6 389.5 1008.2 388.7C1008.8 387.9 1010.0 386.8 1010.7 387.0C1011.4 387.2 1012.4 388.6 1013.2 390.0C1014.0 391.4 1015.7 395.2 1016.5 397.5C1017.3 399.8 1018.9 405.2 1019.5 407.5C1020.1 409.8 1020.7 411.7 1021.2 415.0C1021.7 418.3 1022.7 429.4 1023.2 432.5C1023.7 435.6 1024.6 438.0 1025.0 438.0C1025.4 438.0 1026.0 435.9 1026.5 432.5C1027.0 429.1 1028.3 417.2 1029.0 412.5C1029.7 407.8 1031.1 400.5 1032.0 397.5C1032.9 394.5 1034.8 391.3 1035.7 390.0C1036.6 388.7 1038.1 387.8 1039.0 387.5C1039.9 387.2 1041.7 387.2 1042.5 387.5C1043.3 387.8 1044.5 388.3 1045.0 390.0C1045.5 391.7 1045.9 396.0 1046.5 400.0C1047.1 404.0 1048.8 414.3 1049.5 420.0C1050.2 425.7 1051.4 438.3 1052.0 442.5C1052.6 446.7 1053.6 450.9 1054.0 451.2C1054.4 451.5 1054.7 449.8 1055.0 445.0C1055.3 440.2 1055.9 421.0 1056.2 415.0C1056.5 409.0 1057.1 403.2 1057.5 400.0C1057.9 396.8 1058.4 392.8 1059.0 391.2C1059.6 389.6 1061.1 388.4 1062.0 388.2C1062.9 388.0 1064.7 389.3 1065.7 389.5C1066.7 389.7 1068.5 390.3 1069.5 390.0C1070.5 389.7 1072.0 388.5 1073.2 387.5C1074.4 386.5 1076.9 383.7 1078.2 382.5C1079.5 381.3 1082.0 378.9 1083.2 378.2C1084.4 377.5 1086.0 377.3 1087.0 377.5C1088.0 377.7 1089.8 378.8 1090.7 380.0C1091.6 381.2 1093.3 384.4 1094.0 386.2C1094.7 388.0 1095.7 392.5 1096.2 393.7C1096.7 394.9 1097.1 395.7 1097.5 395.0C1097.9 394.3 1098.5 390.1 1099.0 388.7C1099.5 387.3 1100.8 385.1 1101.5 384.5C1102.2 383.9 1103.3 384.3 1104.0 384.5C1104.7 384.7 1105.8 386.3 1106.5 385.7C1107.2 385.1 1108.3 381.3 1109.0 380.0C1109.7 378.7 1110.8 376.4 1111.5 376.2C1112.2 376.0 1113.3 377.2 1114.0 378.7C1114.7 380.2 1116.2 385.2 1117.0 387.5C1117.8 389.8 1119.4 394.6 1120.0 396.2C1120.6 397.8 1121.1 399.5 1121.5 399.2C1121.9 398.9 1122.5 395.2 1123.2 393.7C1123.9 392.2 1125.8 389.0 1127.0 388.0C1128.2 387.0 1130.7 386.5 1132.0 386.2C1133.3 385.9 1136.0 386.3 1137.0 385.5C1138.0 384.7 1138.7 381.7 1139.5 380.0C1140.3 378.3 1141.9 374.1 1142.7 372.5C1143.5 370.9 1145.0 368.5 1145.7 368.2C1146.4 367.9 1147.5 369.6 1148.2 370.5C1148.9 371.4 1150.1 375.4 1150.7 375.0C1151.3 374.6 1152.1 371.5 1152.5 367.5C1152.9 363.5 1153.6 350.0 1154.0 345.0C1154.4 340.0 1155.1 333.4 1155.7 330.0C1156.3 326.6 1157.6 321.2 1158.2 319.5C1158.8 317.8 1159.7 316.8 1160.2 317.0C1160.7 317.2 1161.6 318.1 1162.0 321.2C1162.4 324.3 1162.9 334.5 1163.2 340.0C1163.5 345.5 1164.2 356.5 1164.5 362.5C1164.8 368.5 1165.2 377.3 1165.5 385.0C1165.8 392.7 1166.7 410.6 1167.0 420.0C1167.3 429.4 1167.9 450.8 1168.0 455.5" fill="none" stroke="#5db09a" stroke-width="1.1"/>
<path d="M1375.6 455.5C1375.6 452.1 1375.7 435.7 1375.8 430.0C1375.9 424.3 1376.3 415.3 1376.7 412.5C1377.1 409.7 1378.0 408.9 1378.5 409.2C1379.0 409.5 1380.0 410.6 1380.5 415.0C1381.0 419.4 1382.0 437.8 1382.5 442.5C1383.0 447.2 1383.8 451.7 1384.2 450.0C1384.6 448.3 1385.1 434.1 1385.5 430.0C1385.9 425.9 1387.0 420.2 1387.5 419.5C1388.0 418.8 1388.6 422.3 1389.2 425.0C1389.8 427.7 1391.0 436.8 1391.7 440.0C1392.4 443.2 1393.4 448.2 1394.2 448.7C1395.0 449.2 1397.1 444.4 1397.5 443.7L1397.5 455.5L1375.6 455.5Z" fill="#438274"/><path d="M1375.6 455.5C1375.6 452.1 1375.7 435.7 1375.8 430.0C1375.9 424.3 1376.3 415.3 1376.7 412.5C1377.1 409.7 1378.0 408.9 1378.5 409.2C1379.0 409.5 1380.0 410.6 1380.5 415.0C1381.0 419.4 1382.0 437.8 1382.5 442.5C1383.0 447.2 1383.8 451.7 1384.2 450.0C1384.6 448.3 1385.1 434.1 1385.5 430.0C1385.9 425.9 1387.0 420.2 1387.5 419.5C1388.0 418.8 1388.6 422.3 1389.2 425.0C1389.8 427.7 1391.0 436.8 1391.7 440.0C1392.4 443.2 1393.4 448.2 1394.2 448.7C1395.0 449.2 1397.1 444.4 1397.5 443.7" fill="none" stroke="#5db09a" stroke-width="1.1"/></g>
<g clip-path="url(#cneg)"><path d="M96.0 397.5C96.5 397.0 98.8 393.7 100.0 394.0C101.2 394.3 103.7 397.6 105.0 400.0C106.3 402.4 108.7 411.5 110.0 412.0C111.3 412.5 114.0 404.3 115.0 404.0C116.0 403.7 116.7 404.9 117.5 410.0C118.3 415.1 120.3 436.4 121.0 442.5C121.7 448.6 122.6 453.0 122.9 455.5C123.2 458.0 123.3 459.8 123.5 461.0C123.7 462.2 124.1 464.2 124.4 464.6C124.7 465.0 125.2 464.6 125.4 464.0C125.6 463.4 126.0 461.1 126.2 460.0C126.4 458.9 126.2 458.8 126.7 455.5C127.2 452.2 129.0 438.7 130.0 435.0C131.0 431.3 133.3 428.0 134.5 428.0C135.7 428.0 137.9 431.7 139.0 435.0C140.1 438.3 142.0 449.8 142.5 452.5C143.0 455.2 142.9 454.7 143.1 455.5C143.3 456.3 143.6 458.1 143.8 458.6C144.0 459.1 144.4 459.4 144.6 459.4C144.8 459.4 145.2 458.9 145.4 458.4C145.6 457.9 145.4 460.0 145.9 455.5C146.4 451.0 148.3 432.5 149.0 425.0C149.7 417.5 150.1 402.9 151.0 399.0C151.9 395.1 154.3 395.5 155.5 395.5C156.7 395.5 159.1 395.1 160.0 399.0C160.9 402.9 161.8 420.6 162.5 425.0C163.2 429.4 163.5 430.9 165.0 432.0C166.5 433.1 172.5 433.9 174.0 433.0C175.5 432.1 175.2 428.7 176.0 425.0C176.8 421.3 178.9 408.2 180.0 405.0C181.1 401.8 182.7 401.5 184.0 401.0C185.3 400.5 188.9 400.7 190.0 401.0C191.1 401.3 191.7 403.9 192.5 403.0C193.3 402.1 195.0 395.7 196.0 394.0C197.0 392.3 198.7 391.3 200.0 390.5C201.3 389.7 204.3 388.7 206.0 388.0C207.7 387.3 211.0 385.6 212.5 385.5C214.0 385.4 216.2 387.2 217.5 387.5C218.8 387.8 221.3 388.9 222.5 388.0C223.7 387.1 225.5 380.9 226.5 381.0C227.5 381.1 229.0 387.0 230.0 389.0C231.0 391.0 233.2 394.7 234.0 396.0C234.8 397.3 235.3 400.1 236.0 399.0C236.7 397.9 237.9 389.2 239.0 387.5C240.1 385.8 242.5 385.4 244.0 386.0C245.5 386.6 248.5 391.8 250.0 392.0C251.5 392.2 253.7 390.7 255.0 387.5C256.3 384.3 258.7 368.9 260.0 368.0C261.3 367.1 263.6 378.6 265.0 381.0C266.4 383.4 269.2 386.5 270.5 386.0C271.8 385.5 273.5 377.9 274.5 377.5C275.5 377.1 277.1 382.1 278.0 383.0C278.9 383.9 280.1 386.7 281.0 384.0C281.9 381.3 283.9 367.1 285.0 362.5C286.1 357.9 288.0 350.2 289.0 349.5C290.0 348.8 291.7 355.6 292.5 357.5C293.3 359.4 294.1 366.2 295.0 364.0C295.9 361.8 298.0 341.2 299.0 341.0C300.0 340.8 301.8 358.9 302.5 362.5C303.2 366.1 303.8 371.0 304.5 368.0C305.2 365.0 306.6 345.7 307.5 340.0C308.4 334.3 310.2 329.0 311.0 325.0C311.8 321.0 313.2 317.3 313.7 310.0C314.2 302.7 314.7 282.0 315.0 270.0C315.3 258.0 315.6 230.1 316.0 220.0C316.4 209.9 317.6 196.2 318.2 194.5C318.8 192.8 319.9 202.4 320.5 207.5C321.1 212.6 322.0 224.2 322.5 232.5C323.0 240.8 324.1 259.7 324.5 270.0C324.9 280.3 325.5 300.7 325.7 310.0C325.9 319.3 326.0 332.7 326.3 340.0C326.6 347.3 327.4 363.8 328.0 364.5C328.6 365.2 329.9 348.9 330.5 345.0C331.1 341.1 332.0 334.8 332.7 335.5C333.4 336.2 334.7 344.4 335.5 350.0C336.3 355.6 338.1 372.9 339.0 377.5C339.9 382.1 341.7 384.0 342.5 384.5C343.3 385.0 344.1 385.6 345.0 381.0C345.9 376.4 348.0 357.1 349.0 350.0C350.0 342.9 351.4 332.2 352.5 327.5C353.6 322.8 356.4 319.3 357.5 315.0C358.6 310.7 359.8 301.7 360.5 295.0C361.2 288.3 362.0 275.0 362.5 265.0C363.0 255.0 363.7 230.0 364.0 220.0C364.3 210.0 364.6 196.0 365.0 190.0C365.4 184.0 366.2 175.0 366.7 175.0C367.2 175.0 368.1 183.0 368.7 190.0C369.3 197.0 370.6 217.5 371.2 227.5C371.8 237.5 372.8 256.0 373.2 265.0C373.6 274.0 374.1 289.0 374.5 295.0C374.9 301.0 375.5 310.0 376.2 310.0C376.9 310.0 379.0 299.7 380.0 295.0C381.0 290.3 382.9 278.9 383.7 275.0C384.5 271.1 385.6 266.0 386.2 266.0C386.8 266.0 387.6 270.5 388.0 275.0C388.4 279.5 388.8 293.3 389.2 300.0C389.6 306.7 389.9 320.2 390.7 325.0C391.5 329.8 394.0 332.0 395.0 336.0C396.0 340.0 397.2 348.5 398.0 355.0C398.8 361.5 400.1 379.1 401.0 385.0C401.9 390.9 403.9 398.3 405.0 399.0C406.1 399.7 408.0 391.5 409.0 390.0C410.0 388.5 411.4 388.1 412.5 388.0C413.6 387.9 415.9 388.9 417.0 389.5C418.1 390.1 419.4 393.1 420.5 392.5C421.6 391.9 423.8 386.6 425.0 385.0C426.2 383.4 428.3 380.9 429.5 380.5C430.7 380.1 432.6 382.1 434.0 382.0C435.4 381.9 438.2 379.6 440.0 379.5C441.8 379.4 445.6 381.3 447.5 381.5C449.4 381.7 452.9 382.3 454.0 381.0C455.1 379.7 455.1 375.0 455.5 372.0C455.9 369.0 456.7 360.8 457.2 358.7C457.7 356.6 458.5 355.5 459.0 356.2C459.5 356.9 460.4 361.5 461.0 363.7C461.6 365.9 462.7 370.5 463.5 372.5C464.3 374.5 466.2 377.0 467.2 378.7C468.2 380.4 470.0 383.2 471.0 385.0C472.0 386.8 473.8 390.7 474.7 392.5C475.6 394.3 477.2 398.4 478.0 398.7C478.8 399.0 479.9 395.9 480.5 395.0C481.1 394.1 482.1 391.9 482.7 391.7C483.3 391.5 484.1 392.4 484.7 393.7C485.3 395.0 486.4 399.5 487.2 401.2C488.0 402.9 490.0 405.4 491.0 406.2C492.0 407.0 493.5 407.4 494.7 407.5C495.9 407.6 498.5 407.3 499.7 407.0C500.9 406.7 502.3 405.7 503.5 405.5C504.7 405.3 507.3 405.4 508.5 405.7C509.7 406.0 511.4 406.8 512.2 407.5C513.0 408.2 514.0 410.3 514.7 411.2C515.4 412.1 516.5 414.4 517.2 414.2C517.9 414.0 519.1 410.9 519.7 410.0C520.3 409.1 521.1 407.5 521.7 407.5C522.3 407.5 523.4 409.0 524.0 410.0C524.6 411.0 525.4 411.7 526.0 415.0C526.6 418.3 527.9 430.2 528.5 435.0C529.1 439.8 529.9 448.5 530.2 451.2C530.5 453.9 530.7 454.9 530.8 455.6C530.9 456.3 531.1 456.8 531.2 456.8C531.3 456.8 531.4 457.2 531.6 455.6C531.8 454.0 532.5 448.3 533.0 445.0C533.5 441.7 534.8 434.4 535.5 431.2C536.2 428.0 537.8 422.9 538.5 421.2C539.2 419.5 540.4 418.2 541.0 418.7C541.6 419.2 542.5 422.2 543.0 425.0C543.5 427.8 544.1 436.8 544.7 440.0C545.3 443.2 546.4 447.3 547.2 448.7C548.0 450.1 549.8 451.2 550.5 450.7C551.2 450.2 551.7 448.1 552.2 445.0C552.7 441.9 553.4 431.3 554.0 427.5C554.6 423.7 555.9 418.2 556.7 416.2C557.5 414.2 559.0 412.7 559.7 412.5C560.4 412.3 561.3 413.0 561.7 415.0C562.1 417.0 562.6 424.7 563.0 427.5C563.4 430.3 564.0 435.3 564.7 436.2C565.4 437.1 567.2 434.9 568.0 434.5C568.8 434.1 570.1 433.1 571.0 433.2C571.9 433.3 574.0 435.3 574.7 435.0C575.4 434.7 576.1 433.0 576.5 431.2C576.9 429.4 577.5 422.9 578.0 421.2C578.5 419.5 579.5 418.5 580.2 418.7C580.9 418.9 582.3 420.8 583.0 422.5C583.7 424.2 584.9 428.2 585.5 431.2C586.1 434.2 586.7 442.3 587.2 445.0C587.7 447.7 588.7 450.7 589.2 451.2C589.7 451.7 590.3 450.9 591.0 448.7C591.7 446.5 593.7 438.8 594.7 435.0C595.7 431.2 597.5 423.8 598.5 420.0C599.5 416.2 601.4 408.3 602.2 406.2C603.0 404.1 603.5 404.2 604.2 404.2C604.9 404.2 606.3 405.7 607.2 406.2C608.1 406.7 609.8 407.8 611.0 408.0C612.2 408.2 615.0 408.2 616.0 407.5C617.0 406.8 617.8 404.2 618.5 402.5C619.2 400.8 620.2 396.3 621.0 395.0C621.8 393.7 623.7 393.3 624.7 393.0C625.7 392.7 627.7 392.1 628.5 392.5C629.3 392.9 630.3 395.1 631.0 396.2C631.7 397.3 632.8 399.5 633.5 400.5C634.2 401.5 635.8 403.6 636.5 403.7C637.2 403.8 638.1 403.4 638.5 401.2C638.9 399.0 639.4 391.2 639.7 387.5C640.0 383.8 640.6 376.0 641.0 373.7C641.4 371.4 642.1 370.0 642.5 370.0C642.9 370.0 643.5 372.4 644.0 373.7C644.5 375.0 645.4 378.8 646.0 380.0C646.6 381.2 647.7 382.4 648.5 383.0C649.3 383.6 651.2 383.9 652.2 384.5C653.2 385.1 655.0 386.7 656.0 387.5C657.0 388.3 658.9 390.1 659.7 390.7C660.5 391.3 661.5 392.3 662.2 392.0C662.9 391.7 663.9 389.4 664.7 388.7C665.5 388.0 667.1 386.8 668.0 386.7C668.9 386.6 670.6 387.6 671.5 388.0C672.4 388.4 673.8 389.2 674.7 390.0C675.6 390.8 677.5 392.4 678.5 393.7C679.5 395.0 681.3 398.4 682.2 399.5C683.1 400.6 684.8 402.0 685.5 401.7C686.2 401.4 686.8 399.7 687.2 397.5C687.6 395.3 688.1 387.1 688.5 385.0C688.9 382.9 689.7 382.1 690.5 381.7C691.3 381.3 693.7 382.1 694.7 382.0C695.7 381.9 697.2 381.4 698.0 380.7C698.8 380.0 699.9 377.3 700.5 377.0C701.1 376.7 701.7 377.5 702.2 378.7C702.7 379.9 703.6 384.8 704.0 386.2C704.4 387.6 705.1 390.0 705.5 389.2C705.9 388.4 706.4 385.2 706.7 380.0C707.0 374.8 707.7 357.7 708.0 350.0C708.3 342.3 708.7 327.5 709.0 322.5C709.3 317.5 709.9 312.5 710.2 312.5C710.5 312.5 711.1 317.5 711.5 322.5C711.9 327.5 712.6 341.7 713.0 350.0C713.4 358.3 714.2 376.3 714.7 385.0C715.2 393.7 716.1 408.7 716.5 415.0C716.9 421.3 717.3 429.6 717.7 432.5C718.1 435.4 719.0 436.7 719.7 437.0C720.4 437.3 722.3 436.3 723.0 435.0C723.7 433.7 724.2 431.2 724.7 427.5C725.2 423.8 726.1 411.5 726.5 407.5C726.9 403.5 727.3 399.4 727.7 397.5C728.1 395.6 728.8 393.2 729.2 393.0C729.6 392.8 730.4 394.8 731.0 396.2C731.6 397.6 732.9 402.7 733.5 403.2C734.1 403.7 734.9 401.4 735.5 400.0C736.1 398.6 737.1 394.1 737.7 393.0C738.3 391.9 739.2 391.4 739.7 391.7C740.2 392.0 741.0 393.4 741.7 395.5C742.4 397.6 744.0 404.2 744.7 407.5C745.4 410.8 746.6 417.3 747.2 420.0C747.8 422.7 748.6 427.4 749.0 427.5C749.4 427.6 750.0 424.3 750.5 421.0C751.0 417.7 752.1 406.5 752.7 402.5C753.3 398.5 754.5 393.3 755.2 391.2C755.9 389.1 757.3 387.2 758.0 386.7C758.7 386.2 759.6 386.4 760.2 387.5C760.8 388.6 762.0 392.0 762.7 395.0C763.4 398.0 764.6 406.0 765.2 410.0C765.8 414.0 766.6 422.3 767.2 425.0C767.8 427.7 768.7 429.6 769.7 430.5C770.7 431.4 773.4 431.5 774.7 431.5C776.0 431.5 778.6 431.9 779.5 430.5C780.4 429.1 780.7 424.1 781.2 421.0C781.7 417.9 782.8 410.8 783.5 407.5C784.2 404.2 785.7 398.7 786.5 396.2C787.3 393.7 788.9 390.1 789.7 388.7C790.5 387.3 792.0 385.7 792.7 385.5C793.4 385.3 794.2 385.6 794.7 387.5C795.2 389.4 796.1 395.3 796.7 400.0C797.3 404.7 798.4 418.2 799.0 422.5C799.6 426.8 800.5 430.9 801.0 432.5C801.5 434.1 802.2 434.4 802.7 434.2C803.2 434.0 804.1 433.0 804.7 431.2C805.3 429.4 806.5 424.2 807.0 421.0C807.5 417.8 808.0 410.8 808.5 407.5C809.0 404.2 810.4 397.8 811.0 396.2C811.6 394.6 812.2 394.7 812.7 395.7C813.2 396.7 814.2 402.0 814.7 403.7C815.2 405.4 816.1 408.9 816.5 408.7C816.9 408.5 817.6 404.5 818.0 402.5C818.4 400.5 819.2 394.9 819.7 393.7C820.2 392.5 821.2 393.5 822.0 393.5C822.8 393.5 824.7 394.0 825.7 393.7C826.7 393.4 828.5 391.6 829.5 391.2C830.5 390.8 832.2 390.6 833.2 390.7C834.2 390.8 836.0 391.6 837.0 392.0C838.0 392.4 839.8 393.7 840.7 393.7C841.6 393.7 843.2 392.0 844.0 391.7C844.8 391.4 845.8 391.0 846.5 391.2C847.2 391.4 848.6 392.9 849.5 393.0C850.4 393.1 852.0 392.6 853.2 392.0C854.4 391.4 857.0 389.8 858.2 388.7C859.4 387.6 861.2 385.2 862.0 383.7C862.8 382.2 863.9 378.4 864.5 377.5C865.1 376.6 865.7 376.5 866.2 377.0C866.7 377.5 867.6 379.6 868.2 381.2C868.8 382.8 870.0 386.9 870.7 388.7C871.4 390.5 872.6 392.8 873.2 395.0C873.8 397.2 874.7 400.3 875.2 405.0C875.7 409.7 876.5 423.5 877.0 430.0C877.5 436.5 878.7 450.2 879.0 453.7C879.3 457.2 879.2 455.5 879.3 456.0C879.4 456.5 879.7 457.8 879.8 457.8C879.9 457.8 880.2 456.6 880.3 456.0C880.4 455.4 880.4 455.8 880.6 453.0C880.8 450.2 881.0 438.3 881.5 435.0C882.0 431.7 882.9 429.0 884.0 428.0C885.1 427.0 888.5 428.9 889.5 427.5C890.5 426.1 891.0 421.5 891.5 417.5C892.0 413.5 892.6 401.8 893.2 397.5C893.8 393.2 895.0 387.3 895.7 385.0C896.4 382.7 897.5 380.8 898.2 380.5C898.9 380.2 900.0 381.4 900.7 382.5C901.4 383.6 902.4 387.3 903.2 388.7C904.0 390.1 906.0 392.4 907.0 393.2C908.0 394.0 909.8 394.8 910.7 395.0C911.6 395.2 913.3 395.3 914.0 394.5C914.7 393.7 915.2 390.2 915.7 388.7C916.2 387.2 916.8 383.9 917.5 383.0C918.2 382.1 919.8 382.0 920.7 382.0C921.6 382.0 923.2 382.1 924.0 383.0C924.8 383.9 925.8 387.4 926.5 388.7C927.2 390.0 928.7 391.8 929.5 392.5C930.3 393.2 931.8 392.7 932.5 393.7C933.2 394.7 934.0 397.2 934.5 400.0C935.0 402.8 936.1 412.2 936.5 415.0C936.9 417.8 937.4 421.2 937.7 421.2C938.0 421.2 938.6 418.2 939.0 415.0C939.4 411.8 940.1 401.2 940.7 397.5C941.3 393.8 942.5 389.3 943.2 387.5C943.9 385.7 945.4 384.0 946.2 383.7C947.0 383.4 948.7 384.9 949.5 385.0C950.3 385.1 951.7 384.9 952.5 384.5C953.3 384.1 954.9 382.1 955.7 381.7C956.5 381.3 957.4 381.1 958.2 381.7C959.0 382.3 960.7 384.9 961.5 386.2C962.3 387.5 963.8 389.4 964.5 391.2C965.2 393.0 966.3 397.0 967.0 400.0C967.7 403.0 968.9 411.0 969.5 413.7C970.1 416.4 970.9 420.2 971.5 420.5C972.1 420.8 973.1 417.4 973.7 416.2C974.3 415.0 975.6 411.5 976.2 411.2C976.8 410.9 977.6 411.9 978.0 413.7C978.4 415.5 978.7 420.2 979.0 425.0C979.3 429.8 980.0 445.9 980.2 450.0C980.4 454.1 980.4 454.5 980.5 456.0C980.6 457.5 980.7 460.1 980.8 461.0C980.9 461.9 981.4 462.9 981.6 462.9C981.8 462.9 982.3 461.9 982.4 461.0C982.5 460.1 982.6 460.8 982.7 456.0C982.8 451.2 983.3 430.8 983.5 425.0C983.7 419.2 984.2 414.5 984.5 412.5C984.8 410.5 985.5 410.1 986.0 410.0C986.5 409.9 987.6 411.3 988.2 412.0C988.8 412.7 990.1 415.1 990.7 415.0C991.3 414.9 992.0 413.2 992.7 411.2C993.4 409.2 995.0 402.5 995.7 400.0C996.4 397.5 997.5 393.7 998.2 392.5C998.9 391.3 999.9 390.7 1000.7 390.7C1001.5 390.7 1003.3 392.2 1004.0 392.5C1004.7 392.8 1005.6 393.5 1006.2 393.0C1006.8 392.5 1007.6 389.5 1008.2 388.7C1008.8 387.9 1010.0 386.8 1010.7 387.0C1011.4 387.2 1012.4 388.6 1013.2 390.0C1014.0 391.4 1015.7 395.2 1016.5 397.5C1017.3 399.8 1018.9 405.2 1019.5 407.5C1020.1 409.8 1020.7 411.7 1021.2 415.0C1021.7 418.3 1022.7 429.4 1023.2 432.5C1023.7 435.6 1024.6 438.0 1025.0 438.0C1025.4 438.0 1026.0 435.9 1026.5 432.5C1027.0 429.1 1028.3 417.2 1029.0 412.5C1029.7 407.8 1031.1 400.5 1032.0 397.5C1032.9 394.5 1034.8 391.3 1035.7 390.0C1036.6 388.7 1038.1 387.8 1039.0 387.5C1039.9 387.2 1041.7 387.2 1042.5 387.5C1043.3 387.8 1044.5 388.3 1045.0 390.0C1045.5 391.7 1045.9 396.0 1046.5 400.0C1047.1 404.0 1048.8 414.3 1049.5 420.0C1050.2 425.7 1051.4 438.3 1052.0 442.5C1052.6 446.7 1053.6 450.9 1054.0 451.2C1054.4 451.5 1054.7 449.8 1055.0 445.0C1055.3 440.2 1055.9 421.0 1056.2 415.0C1056.5 409.0 1057.1 403.2 1057.5 400.0C1057.9 396.8 1058.4 392.8 1059.0 391.2C1059.6 389.6 1061.1 388.4 1062.0 388.2C1062.9 388.0 1064.7 389.3 1065.7 389.5C1066.7 389.7 1068.5 390.3 1069.5 390.0C1070.5 389.7 1072.0 388.5 1073.2 387.5C1074.4 386.5 1076.9 383.7 1078.2 382.5C1079.5 381.3 1082.0 378.9 1083.2 378.2C1084.4 377.5 1086.0 377.3 1087.0 377.5C1088.0 377.7 1089.8 378.8 1090.7 380.0C1091.6 381.2 1093.3 384.4 1094.0 386.2C1094.7 388.0 1095.7 392.5 1096.2 393.7C1096.7 394.9 1097.1 395.7 1097.5 395.0C1097.9 394.3 1098.5 390.1 1099.0 388.7C1099.5 387.3 1100.8 385.1 1101.5 384.5C1102.2 383.9 1103.3 384.3 1104.0 384.5C1104.7 384.7 1105.8 386.3 1106.5 385.7C1107.2 385.1 1108.3 381.3 1109.0 380.0C1109.7 378.7 1110.8 376.4 1111.5 376.2C1112.2 376.0 1113.3 377.2 1114.0 378.7C1114.7 380.2 1116.2 385.2 1117.0 387.5C1117.8 389.8 1119.4 394.6 1120.0 396.2C1120.6 397.8 1121.1 399.5 1121.5 399.2C1121.9 398.9 1122.5 395.2 1123.2 393.7C1123.9 392.2 1125.8 389.0 1127.0 388.0C1128.2 387.0 1130.7 386.5 1132.0 386.2C1133.3 385.9 1136.0 386.3 1137.0 385.5C1138.0 384.7 1138.7 381.7 1139.5 380.0C1140.3 378.3 1141.9 374.1 1142.7 372.5C1143.5 370.9 1145.0 368.5 1145.7 368.2C1146.4 367.9 1147.5 369.6 1148.2 370.5C1148.9 371.4 1150.1 375.4 1150.7 375.0C1151.3 374.6 1152.1 371.5 1152.5 367.5C1152.9 363.5 1153.6 350.0 1154.0 345.0C1154.4 340.0 1155.1 333.4 1155.7 330.0C1156.3 326.6 1157.6 321.2 1158.2 319.5C1158.8 317.8 1159.7 316.8 1160.2 317.0C1160.7 317.2 1161.6 318.1 1162.0 321.2C1162.4 324.3 1162.9 334.5 1163.2 340.0C1163.5 345.5 1164.2 356.5 1164.5 362.5C1164.8 368.5 1165.2 377.3 1165.5 385.0C1165.8 392.7 1166.7 410.6 1167.0 420.0C1167.3 429.4 1167.9 450.8 1168.0 455.5L1168.0 455.5L96.0 455.5Z" fill="#d94a4a"/></g>
<line x1="93.5" x2="1397.5" y1="456.0" y2="456.0" stroke="#4c4e52" stroke-width="1" stroke-dasharray="4 2.3"/>
<line x1="118.0" x2="118.0" y1="456.5" y2="460" stroke="#1a1c21" stroke-width="1"/>
<line x1="171.2" x2="171.2" y1="456.5" y2="460" stroke="#1a1c21" stroke-width="1"/>
<line x1="224.4" x2="224.4" y1="456.5" y2="460" stroke="#1a1c21" stroke-width="1"/>
<line x1="277.6" x2="277.6" y1="456.5" y2="460" stroke="#1a1c21" stroke-width="1"/>
<line x1="330.8" x2="330.8" y1="456.5" y2="460" stroke="#1a1c21" stroke-width="1"/>
<line x1="384.0" x2="384.0" y1="456.5" y2="460" stroke="#1a1c21" stroke-width="1"/>
<line x1="437.2" x2="437.2" y1="456.5" y2="460" stroke="#1a1c21" stroke-width="1"/>
<line x1="490.4" x2="490.4" y1="456.5" y2="460" stroke="#1a1c21" stroke-width="1"/>
<line x1="543.6" x2="543.6" y1="456.5" y2="460" stroke="#1a1c21" stroke-width="1"/>
<line x1="596.8" x2="596.8" y1="456.5" y2="460" stroke="#1a1c21" stroke-width="1"/>
<line x1="650.0" x2="650.0" y1="456.5" y2="460" stroke="#1a1c21" stroke-width="1"/>
<line x1="703.1" x2="703.1" y1="456.5" y2="460" stroke="#1a1c21" stroke-width="1"/>
<line x1="756.3" x2="756.3" y1="456.5" y2="460" stroke="#1a1c21" stroke-width="1"/>
<line x1="809.5" x2="809.5" y1="456.5" y2="460" stroke="#1a1c21" stroke-width="1"/>
<line x1="862.7" x2="862.7" y1="456.5" y2="460" stroke="#1a1c21" stroke-width="1"/>
<line x1="915.9" x2="915.9" y1="456.5" y2="460" stroke="#1a1c21" stroke-width="1"/>
<line x1="969.1" x2="969.1" y1="456.5" y2="460" stroke="#1a1c21" stroke-width="1"/>
<line x1="1022.3" x2="1022.3" y1="456.5" y2="460" stroke="#1a1c21" stroke-width="1"/>
<line x1="1075.5" x2="1075.5" y1="456.5" y2="460" stroke="#1a1c21" stroke-width="1"/>
<line x1="1128.7" x2="1128.7" y1="456.5" y2="460" stroke="#1a1c21" stroke-width="1"/>
<line x1="1181.9" x2="1181.9" y1="456.5" y2="460" stroke="#1a1c21" stroke-width="1"/>
<line x1="1235.1" x2="1235.1" y1="456.5" y2="460" stroke="#1a1c21" stroke-width="1"/>
<line x1="1288.3" x2="1288.3" y1="456.5" y2="460" stroke="#1a1c21" stroke-width="1"/>
<line x1="1341.5" x2="1341.5" y1="456.5" y2="460" stroke="#1a1c21" stroke-width="1"/>
<line x1="1394.7" x2="1394.7" y1="456.5" y2="460" stroke="#1a1c21" stroke-width="1"/>
<path d="M95.5 473.8C95.8 472.8 97.0 467.7 97.5 466.0C98.0 464.3 98.8 461.9 99.3 461.2C99.8 460.5 100.8 460.1 101.2 460.5C101.6 460.9 102.3 462.8 102.6 464.0C102.9 465.2 103.3 468.3 103.7 469.4C104.1 470.5 104.8 472.2 105.3 472.4C105.8 472.6 106.6 471.5 107.1 470.8C107.6 470.1 108.7 468.0 109.2 467.4C109.7 466.8 110.4 466.2 110.8 466.4C111.2 466.6 111.9 467.6 112.3 468.7C112.7 469.8 113.5 473.3 114.0 474.9C114.5 476.5 115.5 479.7 116.0 481.0C116.5 482.3 117.4 484.1 118.0 484.9C118.6 485.7 120.0 486.8 120.8 487.2C121.6 487.6 123.4 488.0 124.2 487.9C125.0 487.8 126.4 487.0 127.0 486.5C127.6 486.0 128.5 484.3 129.0 484.0C129.5 483.7 130.0 483.7 130.4 484.0C130.8 484.3 131.7 486.0 132.2 486.5C132.7 487.0 133.5 487.6 134.0 487.6C134.5 487.6 135.4 486.9 135.9 486.5C136.4 486.1 137.4 484.8 137.9 484.5C138.4 484.2 139.4 483.9 140.0 484.0C140.6 484.1 142.1 484.7 142.7 484.9C143.3 485.1 144.3 485.3 144.8 485.2C145.3 485.1 145.8 484.7 146.1 483.8C146.4 482.9 146.9 479.8 147.2 478.3C147.5 476.8 147.8 474.2 148.2 472.9C148.6 471.6 149.6 469.5 150.2 468.7C150.8 467.9 152.3 467.2 153.0 466.7C153.7 466.2 155.1 465.3 155.7 464.9C156.3 464.5 157.3 463.6 157.8 463.5C158.3 463.4 159.4 463.9 159.8 464.4C160.2 464.9 160.6 466.4 160.9 467.4C161.2 468.4 161.5 470.8 161.9 471.8C162.3 472.8 163.3 474.3 163.9 474.9C164.5 475.5 166.0 476.3 166.7 476.5C167.4 476.7 168.7 476.5 169.4 476.3C170.1 476.1 171.3 475.2 172.1 474.9C172.9 474.6 174.8 474.1 175.6 473.8C176.4 473.5 177.5 472.9 178.3 472.4C179.1 471.9 180.7 470.5 181.7 469.8C182.7 469.1 184.8 467.9 185.8 467.4C186.8 466.9 188.4 466.4 189.2 466.0C190.0 465.6 191.4 465.1 192.0 464.6C192.6 464.1 193.2 463.2 193.6 461.9C194.0 460.6 194.4 456.8 194.7 455.0C195.0 453.2 195.6 449.6 196.1 448.2C196.6 446.8 197.5 445.4 198.1 444.8C198.7 444.2 200.2 443.5 200.9 443.4C201.6 443.3 202.9 443.5 203.6 443.8C204.3 444.1 205.5 445.1 206.1 445.5C206.7 445.9 207.6 446.7 208.0 446.6C208.4 446.5 209.1 445.7 209.4 444.8C209.7 443.9 209.8 443.6 210.0 440.0C210.2 436.4 210.6 421.4 211.0 417.5C211.4 413.6 212.2 412.1 213.0 411.0C213.8 409.9 216.2 410.8 217.0 409.5C217.8 408.2 218.5 402.5 219.0 401.0C219.5 399.5 219.5 398.9 221.0 398.5C222.5 398.1 228.3 397.8 230.0 398.0C231.7 398.2 233.3 398.1 234.0 400.0C234.7 401.9 234.6 410.2 235.0 412.5C235.4 414.8 236.3 417.3 237.0 417.0C237.7 416.7 238.9 411.7 240.0 410.0C241.1 408.3 243.7 405.2 245.0 404.0C246.3 402.8 248.7 401.0 250.0 401.0C251.3 401.0 254.1 403.8 255.0 404.0C255.9 404.2 256.5 404.5 257.0 402.5C257.5 400.5 258.5 391.5 259.0 389.0C259.5 386.5 260.0 383.9 260.5 384.0C261.0 384.1 262.0 387.7 262.5 390.0C263.0 392.3 263.8 399.0 264.5 401.0C265.2 403.0 266.7 403.8 267.5 405.0C268.3 406.2 269.8 408.0 270.5 410.0C271.2 412.0 272.4 418.3 273.0 420.0C273.6 421.7 274.2 422.5 275.0 422.5C275.8 422.5 278.2 421.3 279.0 420.0C279.8 418.7 280.5 414.6 281.0 412.5C281.5 410.4 282.1 405.8 283.0 404.5C283.9 403.2 286.4 403.3 287.5 403.0C288.6 402.7 290.1 403.1 291.0 402.0C291.9 400.9 293.3 397.9 294.0 395.0C294.7 392.1 295.5 383.0 296.0 380.0C296.5 377.0 297.2 373.5 298.0 372.5C298.8 371.5 300.9 372.7 302.0 372.5C303.1 372.3 304.9 371.9 306.0 371.0C307.1 370.1 308.9 367.8 310.0 366.0C311.1 364.2 313.2 361.0 314.0 357.5C314.8 354.0 315.7 344.3 316.0 340.0C316.3 335.7 316.1 328.5 316.1 325.0C316.1 321.5 315.9 315.7 316.2 313.7C316.5 311.7 317.3 310.1 318.0 310.0C318.7 309.9 320.3 312.2 321.2 313.0C322.1 313.8 324.2 315.4 325.0 316.0C325.8 316.6 326.9 318.3 327.5 317.5C328.1 316.7 329.1 314.0 329.5 310.0C329.9 306.0 330.4 291.8 330.7 287.5C331.0 283.2 331.4 279.1 331.7 277.5C332.0 275.9 332.7 275.4 333.0 275.7C333.3 276.0 333.8 277.8 334.2 280.0C334.6 282.2 335.2 289.7 335.7 292.5C336.2 295.3 337.3 299.4 338.0 301.0C338.7 302.6 339.9 304.1 340.7 304.5C341.5 304.9 343.1 304.6 343.7 303.7C344.3 302.8 344.7 300.0 345.0 297.5C345.3 295.0 345.7 287.3 346.2 285.0C346.7 282.7 348.0 281.0 348.7 280.0C349.4 279.0 350.6 278.8 351.2 277.5C351.8 276.2 352.6 274.3 353.0 270.0C353.4 265.7 354.2 250.2 354.5 245.0C354.8 239.8 355.1 233.2 355.5 231.0C355.9 228.8 356.9 228.8 357.5 228.7C358.1 228.6 359.3 230.0 360.0 230.0C360.7 230.0 362.4 230.4 363.0 228.7C363.6 227.0 364.1 219.9 364.5 217.5C364.9 215.1 365.3 211.6 365.7 210.5C366.1 209.4 367.1 208.8 367.5 209.5C367.9 210.2 368.3 213.4 368.7 216.0C369.1 218.6 370.0 225.5 370.5 228.7C371.0 231.9 371.9 237.8 372.5 240.0C373.1 242.2 374.2 244.2 375.0 245.0C375.8 245.8 377.7 246.0 378.7 246.0C379.7 246.0 381.7 246.0 382.5 245.0C383.3 244.0 384.0 240.0 384.5 238.7C385.0 237.4 385.7 235.5 386.2 235.5C386.7 235.5 387.6 236.8 388.0 238.7C388.4 240.6 389.1 246.8 389.5 250.0C389.9 253.2 390.6 259.2 391.2 262.5C391.8 265.8 392.9 271.3 393.7 275.0C394.5 278.7 396.5 285.9 397.5 290.0C398.5 294.1 400.4 302.2 401.2 306.0C402.0 309.8 403.1 316.4 403.7 318.7C404.3 321.0 405.1 322.8 405.5 323.0C405.9 323.2 406.6 321.7 407.0 320.0C407.4 318.3 408.2 311.7 408.7 310.0C409.2 308.3 410.0 307.4 410.5 307.5C411.0 307.6 412.0 309.0 412.5 311.0C413.0 313.0 413.9 320.6 414.2 322.5C414.5 324.4 414.6 323.2 415.0 325.0C415.4 326.8 416.7 333.7 417.5 336.0C418.3 338.3 420.0 341.4 421.0 342.5C422.0 343.6 424.2 345.0 425.0 344.5C425.8 344.0 426.6 341.6 427.0 339.0C427.4 336.4 427.8 327.9 428.0 325.0C428.2 322.1 428.3 318.8 428.7 317.5C429.1 316.2 430.2 315.5 431.2 315.0C432.2 314.5 435.2 314.2 436.2 313.7C437.2 313.2 438.1 311.2 438.7 311.0C439.3 310.8 440.2 311.6 440.7 312.5C441.2 313.4 442.0 316.7 442.5 317.5C443.0 318.3 443.8 319.0 444.5 318.7C445.2 318.4 446.4 316.0 447.5 315.5C448.6 315.0 451.4 315.2 452.5 315.0C453.6 314.8 455.2 314.9 456.0 313.7C456.8 312.5 457.8 307.6 458.5 306.0C459.2 304.4 460.8 302.7 461.5 302.0C462.2 301.3 463.4 300.1 464.0 300.5C464.6 300.9 465.5 302.4 466.0 305.0C466.5 307.6 467.1 316.2 467.7 320.0C468.3 323.8 469.5 331.0 470.2 333.7C470.9 336.4 472.1 339.3 472.7 340.0C473.3 340.7 474.2 340.0 474.7 338.7C475.2 337.4 476.1 331.6 476.5 330.0C476.9 328.4 477.6 326.7 478.0 327.0C478.4 327.3 479.1 330.1 479.5 332.5C479.9 334.9 480.5 342.9 481.0 345.0C481.5 347.1 482.7 347.9 483.5 348.0C484.3 348.1 486.2 345.4 487.2 345.5C488.2 345.6 490.0 347.9 491.0 348.7C492.0 349.5 493.7 350.7 494.7 351.2C495.7 351.7 497.5 352.0 498.5 352.5C499.5 353.0 501.4 355.2 502.2 355.0C503.0 354.8 504.0 352.4 504.7 351.2C505.4 350.0 506.6 346.4 507.2 346.2C507.8 346.0 508.5 347.8 509.2 350.0C509.9 352.2 511.3 359.0 512.2 362.5C513.1 366.0 515.1 373.2 516.0 376.2C516.9 379.2 518.3 383.5 519.0 385.0C519.7 386.5 520.8 387.7 521.5 387.5C522.2 387.3 523.3 384.8 524.0 383.7C524.7 382.6 526.1 379.2 526.7 379.2C527.3 379.2 528.0 381.6 528.5 383.7C529.0 385.8 529.6 392.8 530.2 395.0C530.8 397.2 531.9 399.0 532.7 400.0C533.5 401.0 535.1 401.0 536.0 402.5C536.9 404.0 538.7 408.9 539.7 411.2C540.7 413.5 542.7 418.5 543.5 420.0C544.3 421.5 545.4 422.7 546.0 422.5C546.6 422.3 547.3 420.5 548.0 418.7C548.7 416.9 550.1 410.7 551.0 408.7C551.9 406.7 553.5 404.5 554.7 403.7C555.9 402.9 558.7 403.5 559.7 403.0C560.7 402.5 561.5 401.1 562.2 400.0C562.9 398.9 563.9 395.9 564.7 395.0C565.5 394.1 567.7 393.7 568.5 393.0C569.3 392.3 570.4 391.7 571.0 390.0C571.6 388.3 572.5 381.8 573.0 380.0C573.5 378.2 574.2 376.7 574.7 376.7C575.2 376.7 576.0 377.9 576.5 380.0C577.0 382.1 577.9 389.7 578.5 392.5C579.1 395.3 580.3 399.5 581.0 401.2C581.7 402.9 583.2 404.7 584.0 405.0C584.8 405.3 586.3 403.9 587.2 403.2C588.1 402.5 590.0 400.9 591.0 400.0C592.0 399.1 593.9 397.5 594.7 396.2C595.5 394.9 596.4 391.0 597.2 390.0C598.0 389.0 599.8 388.9 601.0 388.7C602.2 388.5 604.8 388.5 606.0 388.2C607.2 387.9 608.9 387.8 609.7 386.2C610.5 384.6 611.5 379.4 612.2 376.2C612.9 373.0 613.9 365.8 614.7 362.5C615.5 359.2 617.2 353.5 618.0 351.2C618.8 348.9 620.3 346.4 621.0 345.5C621.7 344.6 622.8 343.9 623.5 344.2C624.2 344.5 625.4 346.5 626.0 347.5C626.6 348.5 627.5 351.5 628.0 351.7C628.5 351.9 629.2 350.9 629.7 348.7C630.2 346.5 630.9 338.0 631.5 335.0C632.1 332.0 633.2 328.5 634.0 326.2C634.8 323.9 636.4 319.8 637.2 317.5C638.0 315.2 639.0 310.3 639.7 308.7C640.4 307.1 641.4 306.1 642.2 305.7C643.0 305.3 644.7 305.1 645.5 305.7C646.3 306.3 647.4 308.1 648.0 310.0C648.6 311.9 649.2 317.9 649.7 320.0C650.2 322.1 650.9 324.8 651.7 325.5C652.5 326.2 654.9 325.8 656.0 325.5C657.1 325.2 658.7 323.4 659.7 323.0C660.7 322.6 662.5 322.4 663.5 322.5C664.5 322.6 666.3 323.0 667.2 323.7C668.1 324.4 669.7 326.0 670.5 327.5C671.3 329.0 672.4 332.5 673.0 335.0C673.6 337.5 674.2 344.2 674.7 346.2C675.2 348.2 675.9 350.0 676.5 350.0C677.1 350.0 678.2 347.5 679.0 346.2C679.8 344.9 681.3 342.0 682.2 340.0C683.1 338.0 685.0 333.9 686.0 331.2C687.0 328.5 688.9 323.2 689.7 320.0C690.5 316.8 691.6 310.3 692.2 307.5C692.8 304.7 693.5 300.1 694.0 298.7C694.5 297.3 695.5 296.5 696.0 296.7C696.5 296.9 697.5 299.0 698.0 300.0C698.5 301.0 699.2 303.5 699.7 304.2C700.2 304.9 701.0 305.6 701.5 305.0C702.0 304.4 702.9 300.6 703.5 299.5C704.1 298.4 705.2 297.2 706.0 296.7C706.8 296.2 708.9 295.6 709.7 295.7C710.5 295.8 711.3 295.9 711.7 297.5C712.1 299.1 712.7 303.2 713.0 307.5C713.3 311.8 713.7 325.3 714.0 330.0C714.3 334.7 714.9 340.4 715.5 342.5C716.1 344.6 717.8 345.5 718.5 345.7C719.2 345.9 720.4 345.3 721.0 343.7C721.6 342.1 722.5 335.5 723.0 333.7C723.5 331.9 724.2 329.8 724.7 330.0C725.2 330.2 726.1 332.9 726.5 335.0C726.9 337.1 727.6 343.7 728.0 345.5C728.4 347.3 729.2 348.8 729.7 348.7C730.2 348.6 731.1 346.7 731.7 345.0C732.3 343.3 733.3 338.7 734.0 336.2C734.7 333.7 736.5 327.8 737.2 326.2C737.9 324.6 738.6 324.2 739.2 324.5C739.8 324.8 740.9 327.4 741.5 328.7C742.1 330.0 743.3 333.8 744.0 334.2C744.7 334.6 745.7 332.8 746.5 332.0C747.3 331.2 748.8 328.9 749.7 328.0C750.6 327.1 752.7 326.4 753.5 325.0C754.3 323.6 755.0 320.0 755.5 317.5C756.0 315.0 756.7 308.0 757.2 306.2C757.7 304.4 758.5 303.5 759.0 303.7C759.5 303.9 760.4 305.3 761.0 307.5C761.6 309.7 762.9 316.0 763.5 320.0C764.1 324.0 765.1 333.8 765.5 337.5C765.9 341.2 766.3 345.8 766.7 347.5C767.1 349.2 767.9 350.1 768.5 350.0C769.1 349.9 770.7 347.5 771.5 347.0C772.3 346.5 773.8 345.8 774.7 346.2C775.6 346.6 777.5 348.5 778.5 350.0C779.5 351.5 781.2 355.7 782.2 357.5C783.2 359.3 785.1 361.9 786.0 363.7C786.9 365.5 788.3 369.2 789.0 371.2C789.7 373.2 790.9 377.6 791.5 378.7C792.1 379.8 792.8 379.8 793.5 379.2C794.2 378.6 795.7 375.7 796.5 374.5C797.3 373.3 798.8 371.3 799.7 370.0C800.6 368.7 802.3 367.0 803.0 365.0C803.7 363.0 804.2 356.8 804.7 355.0C805.2 353.2 805.9 351.8 806.7 351.2C807.5 350.6 810.1 350.4 811.0 350.7C811.9 351.0 812.9 352.1 813.5 353.7C814.1 355.3 814.8 360.8 815.5 362.5C816.2 364.2 817.6 365.5 818.5 366.2C819.4 366.9 821.1 367.8 822.0 367.5C822.9 367.2 824.3 365.5 825.0 363.7C825.7 361.9 826.8 357.2 827.5 353.7C828.2 350.2 829.4 342.0 830.0 337.5C830.6 333.0 831.5 323.8 832.0 320.0C832.5 316.2 833.2 310.5 833.7 308.7C834.2 306.9 835.1 306.4 835.7 306.7C836.3 307.0 837.4 309.7 838.2 310.7C839.0 311.7 840.5 313.8 841.5 314.5C842.5 315.2 844.5 315.5 845.7 315.7C846.9 315.9 849.7 315.5 850.7 316.2C851.7 316.9 852.5 319.9 853.2 321.2C853.9 322.5 854.9 325.3 855.7 326.2C856.5 327.1 858.5 328.0 859.5 328.2C860.5 328.4 862.4 328.1 863.2 328.0C864.0 327.9 865.1 327.1 865.7 327.5C866.3 327.9 867.1 329.2 867.5 331.2C867.9 333.2 868.3 339.7 868.7 342.5C869.1 345.3 869.6 350.7 870.2 352.5C870.8 354.3 872.5 355.0 873.2 356.2C873.9 357.4 874.7 359.0 875.2 361.2C875.7 363.4 876.5 370.3 877.0 372.5C877.5 374.7 878.3 377.3 879.0 378.0C879.7 378.7 881.1 378.0 882.0 377.5C882.9 377.0 884.8 375.3 885.7 374.5C886.6 373.7 888.3 372.8 889.0 371.2C889.7 369.6 890.6 364.3 891.2 362.5C891.8 360.7 892.8 358.8 893.7 358.0C894.6 357.2 897.2 357.0 898.2 356.2C899.2 355.4 900.7 352.7 901.5 352.0C902.3 351.3 903.3 350.4 904.0 350.7C904.7 351.0 905.9 353.7 906.5 354.5C907.1 355.3 908.1 357.4 908.7 357.0C909.3 356.6 910.2 352.7 910.7 351.2C911.2 349.7 912.0 346.4 912.5 345.7C913.0 345.0 913.9 345.5 914.5 346.2C915.1 346.9 916.3 350.2 917.0 350.7C917.7 351.2 918.8 350.7 919.5 350.0C920.2 349.3 921.4 346.2 922.0 345.5C922.6 344.8 923.6 344.4 924.0 345.0C924.4 345.6 924.8 347.7 925.2 350.0C925.6 352.3 926.4 360.0 927.0 362.5C927.6 365.0 928.7 367.6 929.5 368.7C930.3 369.8 932.2 370.4 933.2 370.5C934.2 370.6 936.2 369.9 937.0 369.2C937.8 368.5 938.8 366.0 939.5 365.0C940.2 364.0 941.3 362.1 942.0 361.7C942.7 361.3 943.7 361.7 944.5 362.0C945.3 362.3 946.7 363.5 947.7 363.7C948.7 363.9 950.9 364.2 952.0 363.7C953.1 363.2 954.7 360.8 955.7 360.0C956.7 359.2 958.6 358.2 959.5 358.0C960.4 357.8 961.8 357.9 962.5 358.7C963.2 359.5 964.0 362.3 964.5 363.7C965.0 365.1 966.0 368.7 966.5 369.2C967.0 369.7 967.7 368.6 968.2 367.5C968.7 366.4 969.5 361.7 970.0 360.7C970.5 359.7 971.5 359.4 972.0 360.0C972.5 360.6 973.3 363.5 974.0 365.0C974.7 366.5 976.2 369.7 977.0 371.2C977.8 372.7 979.2 375.7 980.0 376.2C980.8 376.7 982.4 375.5 983.2 375.0C984.0 374.5 985.0 372.5 985.7 372.5C986.4 372.5 987.5 374.1 988.2 375.0C988.9 375.9 990.1 378.9 990.7 379.2C991.3 379.5 992.0 378.9 992.5 377.5C993.0 376.1 993.9 370.4 994.5 368.7C995.1 367.0 996.3 365.7 997.0 365.0C997.7 364.3 999.2 364.4 1000.0 363.7C1000.8 363.0 1002.3 361.1 1003.2 360.0C1004.1 358.9 1006.1 356.5 1007.0 355.7C1007.9 354.9 1009.3 354.1 1010.0 354.2C1010.7 354.3 1011.9 354.9 1012.5 356.2C1013.1 357.5 1013.9 361.9 1014.5 363.7C1015.1 365.5 1016.3 368.8 1017.0 370.0C1017.7 371.2 1019.1 372.2 1020.0 372.5C1020.9 372.8 1023.1 372.8 1024.0 372.5C1024.9 372.2 1026.0 371.5 1026.5 370.0C1027.0 368.5 1027.6 362.6 1028.0 361.2C1028.4 359.8 1029.0 359.0 1029.5 359.2C1030.0 359.4 1030.9 361.3 1031.5 362.5C1032.1 363.7 1033.1 367.5 1033.7 368.0C1034.3 368.5 1035.2 367.1 1035.7 366.2C1036.2 365.3 1037.0 362.0 1037.5 361.2C1038.0 360.4 1038.8 359.8 1039.5 360.0C1040.2 360.2 1041.7 362.1 1042.5 363.0C1043.3 363.9 1044.9 366.2 1045.7 367.0C1046.5 367.8 1047.9 369.1 1048.7 369.2C1049.5 369.3 1050.7 368.1 1051.5 367.5C1052.3 366.9 1053.7 365.2 1054.5 364.5C1055.3 363.8 1056.8 363.4 1057.5 362.5C1058.2 361.6 1059.3 359.3 1060.0 357.5C1060.7 355.7 1061.7 351.0 1062.5 348.7C1063.3 346.4 1064.8 342.2 1065.7 340.0C1066.6 337.8 1068.5 334.5 1069.5 332.5C1070.5 330.5 1072.3 327.0 1073.2 325.0C1074.1 323.0 1075.4 319.5 1076.2 317.5C1077.0 315.5 1078.3 311.7 1079.0 310.0C1079.7 308.3 1080.8 305.7 1081.5 305.0C1082.2 304.3 1083.3 304.2 1084.0 304.5C1084.7 304.8 1086.2 306.2 1087.0 307.0C1087.8 307.8 1089.3 309.8 1090.0 310.5C1090.7 311.2 1091.8 312.6 1092.5 312.5C1093.2 312.4 1094.2 310.3 1095.0 309.5C1095.8 308.7 1097.1 307.0 1098.2 306.2C1099.3 305.4 1101.7 304.7 1103.0 303.7C1104.3 302.7 1106.8 299.9 1108.0 298.7C1109.2 297.5 1110.9 296.5 1111.7 295.0C1112.5 293.5 1113.6 288.8 1114.2 287.5C1114.8 286.2 1115.6 285.3 1116.2 285.5C1116.8 285.7 1117.9 287.8 1118.5 288.7C1119.1 289.6 1120.4 291.8 1121.0 292.0C1121.6 292.2 1122.6 291.6 1123.0 290.0C1123.4 288.4 1123.7 282.7 1124.2 280.0C1124.7 277.3 1125.9 272.3 1126.7 270.0C1127.5 267.7 1129.5 264.8 1130.5 262.5C1131.5 260.2 1133.2 255.8 1134.2 252.5C1135.2 249.2 1137.0 241.5 1138.0 237.5C1139.0 233.5 1140.8 226.0 1141.7 222.5C1142.6 219.0 1144.3 214.2 1145.0 211.2C1145.7 208.2 1146.5 203.8 1147.0 200.0C1147.5 196.2 1148.1 185.8 1148.5 182.5C1148.9 179.2 1149.6 176.2 1150.0 175.5C1150.4 174.8 1151.1 175.4 1151.5 177.0C1151.9 178.6 1152.5 185.3 1153.0 187.5C1153.5 189.7 1154.8 192.7 1155.5 193.2C1156.2 193.7 1157.3 191.9 1158.0 191.2C1158.7 190.5 1159.9 187.8 1160.5 188.0C1161.1 188.2 1161.8 188.6 1162.2 192.5C1162.6 196.4 1163.1 212.7 1163.5 217.5C1163.9 222.3 1164.5 227.7 1165.0 228.7C1165.5 229.7 1166.8 226.2 1167.5 225.0C1168.2 223.8 1169.4 219.7 1170.0 219.5C1170.6 219.3 1171.2 221.3 1171.7 223.7C1172.2 226.1 1173.0 234.2 1173.7 237.5C1174.4 240.8 1176.0 246.7 1176.7 248.7C1177.4 250.7 1178.5 253.0 1179.2 252.5C1179.9 252.0 1180.9 246.4 1181.7 245.0C1182.5 243.6 1184.0 242.2 1185.0 242.0C1186.0 241.8 1188.0 243.0 1189.2 243.7C1190.4 244.4 1193.2 247.3 1194.2 247.0C1195.2 246.7 1196.0 242.4 1196.7 241.2C1197.4 240.0 1198.4 238.4 1199.2 238.2C1200.0 238.0 1201.6 239.1 1202.5 240.0C1203.4 240.9 1205.2 243.7 1206.0 245.0C1206.8 246.3 1208.1 250.2 1208.7 249.5C1209.3 248.8 1210.1 244.8 1210.5 240.0C1210.9 235.2 1211.3 217.8 1211.7 213.7C1212.1 209.6 1212.9 209.4 1213.5 209.2C1214.1 209.0 1215.3 211.7 1216.0 212.5C1216.7 213.3 1218.1 215.8 1218.7 215.5C1219.3 215.2 1220.0 212.1 1220.5 210.0C1221.0 207.9 1221.8 201.4 1222.2 200.0C1222.6 198.6 1223.3 198.4 1223.7 199.2C1224.1 200.0 1224.9 203.6 1225.5 206.2C1226.1 208.8 1227.2 216.2 1228.0 218.7C1228.8 221.2 1230.9 223.2 1231.7 225.0C1232.5 226.8 1233.5 230.0 1234.2 232.5C1234.9 235.0 1236.0 241.6 1236.7 243.7C1237.4 245.8 1238.4 247.3 1239.2 248.0C1240.0 248.7 1242.0 249.4 1243.0 249.2C1244.0 249.0 1245.8 247.7 1246.7 246.7C1247.6 245.7 1249.2 242.8 1250.0 242.0C1250.8 241.2 1251.8 240.5 1252.5 240.7C1253.2 240.9 1254.7 242.8 1255.5 243.2C1256.3 243.6 1257.9 243.9 1258.7 243.7C1259.5 243.5 1261.0 241.8 1261.7 242.0C1262.4 242.2 1263.4 243.8 1264.2 245.0C1265.0 246.2 1266.7 249.5 1267.5 251.2C1268.3 252.9 1269.9 255.3 1270.5 257.5C1271.1 259.7 1271.8 263.8 1272.2 267.5C1272.6 271.2 1273.2 280.3 1273.5 285.0C1273.8 289.7 1274.0 299.2 1274.2 302.5C1274.4 305.8 1274.7 308.6 1275.0 310.0C1275.3 311.4 1276.0 313.0 1276.7 313.0C1277.4 313.0 1279.0 311.0 1280.0 310.0C1281.0 309.0 1283.1 306.5 1284.2 305.7C1285.3 304.9 1287.3 304.3 1288.5 304.2C1289.7 304.1 1291.9 304.4 1293.0 305.0C1294.1 305.6 1295.9 307.5 1296.7 308.7C1297.5 309.9 1298.5 312.9 1299.2 313.7C1299.9 314.5 1301.0 314.8 1301.7 314.5C1302.4 314.2 1303.5 312.8 1304.2 311.2C1304.9 309.6 1306.1 304.5 1306.7 302.5C1307.3 300.5 1308.1 297.2 1308.7 296.2C1309.3 295.2 1310.4 294.7 1311.0 295.0C1311.6 295.3 1312.4 297.0 1313.0 298.7C1313.6 300.4 1314.8 305.0 1315.5 307.5C1316.2 310.0 1317.3 315.2 1318.0 317.5C1318.7 319.8 1319.7 323.0 1320.5 324.5C1321.3 326.0 1323.4 327.3 1324.2 328.7C1325.0 330.1 1325.7 332.8 1326.2 335.0C1326.7 337.2 1327.5 343.3 1328.0 345.0C1328.5 346.7 1329.2 348.3 1329.7 348.0C1330.2 347.7 1331.1 343.7 1331.7 342.5C1332.3 341.3 1333.4 339.4 1334.2 338.7C1335.0 338.0 1337.2 338.1 1338.0 337.5C1338.8 336.9 1339.9 335.8 1340.5 334.5C1341.1 333.2 1341.7 328.7 1342.2 327.5C1342.7 326.3 1343.5 325.8 1344.2 325.7C1344.9 325.6 1346.4 326.5 1347.2 327.0C1348.0 327.5 1349.6 328.9 1350.5 329.5C1351.4 330.1 1353.2 331.2 1354.2 331.2C1355.2 331.2 1357.0 329.3 1358.0 329.5C1359.0 329.7 1360.8 331.9 1361.7 332.5C1362.6 333.1 1364.2 333.8 1365.0 333.7C1365.8 333.6 1367.3 333.0 1368.0 332.0C1368.7 331.0 1369.9 328.3 1370.5 326.2C1371.1 324.1 1371.8 317.8 1372.2 316.2C1372.6 314.6 1373.1 313.9 1373.5 314.2C1373.9 314.5 1374.6 317.3 1375.0 318.7C1375.4 320.1 1376.1 323.7 1376.7 324.5C1377.3 325.3 1378.4 325.3 1379.2 325.0C1380.0 324.7 1382.0 323.2 1383.0 322.5C1384.0 321.8 1385.9 320.2 1386.7 320.0C1387.5 319.8 1388.4 320.4 1389.2 321.2C1390.0 322.0 1391.7 324.7 1392.5 326.2C1393.3 327.7 1394.8 331.2 1395.5 332.5C1396.2 333.8 1397.2 335.7 1397.5 336.2" fill="none" stroke="#dcb85d" stroke-width="1.2" stroke-linejoin="round"/>
<text x="85" y="110.1" text-anchor="end" font-size="12" fill="#aeb1b5">0.0500%</text>
<text x="85" y="179.3" text-anchor="end" font-size="12" fill="#aeb1b5">0.0400%</text>
<text x="85" y="249.7" text-anchor="end" font-size="12" fill="#aeb1b5">0.0300%</text>
<text x="85" y="319.2" text-anchor="end" font-size="12" fill="#aeb1b5">0.0200%</text>
<text x="85" y="389.3" text-anchor="end" font-size="12" fill="#aeb1b5">0.0100%</text>
<text x="85" y="459.3" text-anchor="end" font-size="12" fill="#aeb1b5">0%</text>
<text x="85" y="529.5" text-anchor="end" font-size="12" fill="#aeb1b5">-0.0100%</text>
<text x="1408.5" y="110.2" font-size="12" fill="#aeb1b5">$0.3267</text>
<text x="1408.5" y="171.6" font-size="12" fill="#aeb1b5">$0.3000</text>
<text x="1408.5" y="241.6" font-size="12" fill="#aeb1b5">$0.2700</text>
<text x="1408.5" y="311.5" font-size="12" fill="#aeb1b5">$0.2400</text>
<text x="1408.5" y="381.7" font-size="12" fill="#aeb1b5">$0.2100</text>
<text x="1408.5" y="451.7" font-size="12" fill="#aeb1b5">$0.1800</text>
<text x="1408.5" y="521.7" font-size="12" fill="#aeb1b5">$0.1500</text>
<text x="120.2" y="544.2" text-anchor="middle" font-size="12" fill="#aeb1b5">4 Jul</text>
<text x="173.4" y="544.2" text-anchor="middle" font-size="12" fill="#aeb1b5">8 Jul</text>
<text x="226.6" y="544.2" text-anchor="middle" font-size="12" fill="#aeb1b5">12 Jul</text>
<text x="279.8" y="544.2" text-anchor="middle" font-size="12" fill="#aeb1b5">15 Jul</text>
<text x="333.0" y="544.2" text-anchor="middle" font-size="12" fill="#aeb1b5">19 Jul</text>
<text x="386.2" y="544.2" text-anchor="middle" font-size="12" fill="#aeb1b5">23 Jul</text>
<text x="439.4" y="544.2" text-anchor="middle" font-size="12" fill="#aeb1b5">26 Jul</text>
<text x="492.6" y="544.2" text-anchor="middle" font-size="12" fill="#aeb1b5">30 Jul</text>
<text x="545.8" y="544.2" text-anchor="middle" font-size="12" fill="#aeb1b5">3 Aug</text>
<text x="599.0" y="544.2" text-anchor="middle" font-size="12" fill="#aeb1b5">6 Aug</text>
<text x="652.2" y="544.2" text-anchor="middle" font-size="12" fill="#aeb1b5">10 Aug</text>
<text x="705.4" y="544.2" text-anchor="middle" font-size="12" fill="#aeb1b5">14 Aug</text>
<text x="758.5" y="544.2" text-anchor="middle" font-size="12" fill="#aeb1b5">17 Aug</text>
<text x="811.7" y="544.2" text-anchor="middle" font-size="12" fill="#aeb1b5">21 Aug</text>
<text x="864.9" y="544.2" text-anchor="middle" font-size="12" fill="#aeb1b5">25 Aug</text>
<text x="918.1" y="544.2" text-anchor="middle" font-size="12" fill="#aeb1b5">28 Aug</text>
<text x="971.3" y="544.2" text-anchor="middle" font-size="12" fill="#aeb1b5">1 Sep</text>
<text x="1024.5" y="544.2" text-anchor="middle" font-size="12" fill="#aeb1b5">5 Sep</text>
<text x="1077.7" y="544.2" text-anchor="middle" font-size="12" fill="#aeb1b5">8 Sep</text>
<text x="1130.9" y="544.2" text-anchor="middle" font-size="12" fill="#aeb1b5">12 Sep</text>
<text x="1184.1" y="544.2" text-anchor="middle" font-size="12" fill="#aeb1b5">16 Sep</text>
<text x="1237.3" y="544.2" text-anchor="middle" font-size="12" fill="#aeb1b5">19 Sep</text>
<text x="1290.5" y="544.2" text-anchor="middle" font-size="12" fill="#aeb1b5">23 Sep</text>
<text x="1344.7" y="544.2" text-anchor="middle" font-size="12" fill="#aeb1b5">27 Sep</text>
<path d="M96.2 590.2L103.8 588.3L112.0 589.3L116.1 591.5L120.2 597.8L123.0 594.8L128.4 593.4L132.5 595.6L136.6 594.3L139.9 591.0L144.3 593.7L150.3 592.1L159.8 589.3L169.4 590.7L183.1 592.9L196.7 592.3L210.4 591.5L218.6 592.9L226.8 591.5L235.5 586.6L243.2 588.0L248.6 586.1L259.6 585.5L273.2 586.9L278.7 586.3L289.6 588.8L297.8 586.6L306.0 586.1L319.7 588.0L333.3 589.1L342.9 588.0L352.5 580.6L357.9 579.8L362.0 573.8L365.3 570.2L368.9 574.6L374.9 571.6L381.1 575.1L385.5 572.2L392.3 574.2L400.5 576.9L406.0 575.0L414.2 578.3L421.0 573.3L426.4 576.9L434.6 576.1L446.9 572.0L453.2 570.9L460.6 575.5L470.2 576.3L477.0 574.7L485.2 574.7L493.4 576.9L498.9 576.1L507.0 581.0L512.5 584.3L524.8 583.2L537.1 582.3L543.9 583.2L550.8 584.3L554.9 588.4L561.7 585.9L568.5 585.1L576.7 585.6L583.6 583.2L589.0 582.3L594.5 581.0L601.3 584.5L608.1 587.8L617.7 587.0L628.6 587.8L639.6 589.7L653.2 589.2L664.2 590.5L675.1 594.1L683.3 591.9L688.8 590.0L702.4 590.5L716.1 590.5L729.7 589.2L743.4 591.1L749.6 588.7L756.4 588.2L763.2 590.1L772.8 590.1L781.0 587.9L789.2 588.7L798.7 587.4L805.6 585.5L809.7 581.9L816.5 581.1L822.0 582.5L832.9 580.0L841.1 583.8L849.3 581.1L857.5 577.8L863.0 572.3L868.4 570.4L873.9 571.0L879.3 566.1L884.8 562.2L890.3 565.5L895.7 565.0L901.2 569.6L906.7 573.2L913.5 575.1L919.0 572.9L927.2 573.2L934.0 571.5L939.5 575.1L947.7 576.4L955.8 577.0L964.0 580.0L970.9 581.9L976.3 583.8L983.2 581.9L990.0 579.7L995.5 581.9L1005.0 580.5L1013.2 576.4L1024.2 571.8L1031.0 573.7L1037.8 573.7L1043.3 575.6L1051.5 571.5L1058.3 571.0L1062.4 575.9L1072.0 575.1L1082.9 572.3L1089.7 576.4L1099.3 579.2L1107.5 576.7L1113.7 578.4L1121.1 572.2L1129.8 573.0L1137.3 575.2L1144.8 579.7L1154.7 577.2L1164.6 576.4L1172.1 578.4L1184.5 577.7L1195.7 579.7L1206.9 577.7L1216.9 578.4L1231.8 577.2L1241.7 572.7L1251.7 571.7L1264.1 569.2L1272.8 563.5L1279.0 558.5L1284.0 561.0L1289.0 564.8L1293.9 566.5L1301.4 565.5L1306.4 566.0L1311.3 561.8L1316.3 562.3L1322.5 566.0L1331.2 565.5L1337.4 566.5L1342.4 572.7L1351.1 572.2L1358.6 571.5L1368.5 576.4L1376.0 574.7L1385.9 574.2L1392.1 572.7L1395.9 574.7L1402.6 574.7L1402.6 609.9L96.2 609.9Z" fill="#0d111f"/>
<rect x="749" y="546.8" width="653.6" height="63.1" fill="#0a0d1f"/>
<g clip-path="url(#csel)"><path d="M96.2 590.2L103.8 588.3L112.0 589.3L116.1 591.5L120.2 597.8L123.0 594.8L128.4 593.4L132.5 595.6L136.6 594.3L139.9 591.0L144.3 593.7L150.3 592.1L159.8 589.3L169.4 590.7L183.1 592.9L196.7 592.3L210.4 591.5L218.6 592.9L226.8 591.5L235.5 586.6L243.2 588.0L248.6 586.1L259.6 585.5L273.2 586.9L278.7 586.3L289.6 588.8L297.8 586.6L306.0 586.1L319.7 588.0L333.3 589.1L342.9 588.0L352.5 580.6L357.9 579.8L362.0 573.8L365.3 570.2L368.9 574.6L374.9 571.6L381.1 575.1L385.5 572.2L392.3 574.2L400.5 576.9L406.0 575.0L414.2 578.3L421.0 573.3L426.4 576.9L434.6 576.1L446.9 572.0L453.2 570.9L460.6 575.5L470.2 576.3L477.0 574.7L485.2 574.7L493.4 576.9L498.9 576.1L507.0 581.0L512.5 584.3L524.8 583.2L537.1 582.3L543.9 583.2L550.8 584.3L554.9 588.4L561.7 585.9L568.5 585.1L576.7 585.6L583.6 583.2L589.0 582.3L594.5 581.0L601.3 584.5L608.1 587.8L617.7 587.0L628.6 587.8L639.6 589.7L653.2 589.2L664.2 590.5L675.1 594.1L683.3 591.9L688.8 590.0L702.4 590.5L716.1 590.5L729.7 589.2L743.4 591.1L749.6 588.7L756.4 588.2L763.2 590.1L772.8 590.1L781.0 587.9L789.2 588.7L798.7 587.4L805.6 585.5L809.7 581.9L816.5 581.1L822.0 582.5L832.9 580.0L841.1 583.8L849.3 581.1L857.5 577.8L863.0 572.3L868.4 570.4L873.9 571.0L879.3 566.1L884.8 562.2L890.3 565.5L895.7 565.0L901.2 569.6L906.7 573.2L913.5 575.1L919.0 572.9L927.2 573.2L934.0 571.5L939.5 575.1L947.7 576.4L955.8 577.0L964.0 580.0L970.9 581.9L976.3 583.8L983.2 581.9L990.0 579.7L995.5 581.9L1005.0 580.5L1013.2 576.4L1024.2 571.8L1031.0 573.7L1037.8 573.7L1043.3 575.6L1051.5 571.5L1058.3 571.0L1062.4 575.9L1072.0 575.1L1082.9 572.3L1089.7 576.4L1099.3 579.2L1107.5 576.7L1113.7 578.4L1121.1 572.2L1129.8 573.0L1137.3 575.2L1144.8 579.7L1154.7 577.2L1164.6 576.4L1172.1 578.4L1184.5 577.7L1195.7 579.7L1206.9 577.7L1216.9 578.4L1231.8 577.2L1241.7 572.7L1251.7 571.7L1264.1 569.2L1272.8 563.5L1279.0 558.5L1284.0 561.0L1289.0 564.8L1293.9 566.5L1301.4 565.5L1306.4 566.0L1311.3 561.8L1316.3 562.3L1322.5 566.0L1331.2 565.5L1337.4 566.5L1342.4 572.7L1351.1 572.2L1358.6 571.5L1368.5 576.4L1376.0 574.7L1385.9 574.2L1392.1 572.7L1395.9 574.7L1402.6 574.7L1402.6 609.9L96.2 609.9Z" fill="#232849"/></g>
<path d="M96.2 590.2L103.8 588.3L112.0 589.3L116.1 591.5L120.2 597.8L123.0 594.8L128.4 593.4L132.5 595.6L136.6 594.3L139.9 591.0L144.3 593.7L150.3 592.1L159.8 589.3L169.4 590.7L183.1 592.9L196.7 592.3L210.4 591.5L218.6 592.9L226.8 591.5L235.5 586.6L243.2 588.0L248.6 586.1L259.6 585.5L273.2 586.9L278.7 586.3L289.6 588.8L297.8 586.6L306.0 586.1L319.7 588.0L333.3 589.1L342.9 588.0L352.5 580.6L357.9 579.8L362.0 573.8L365.3 570.2L368.9 574.6L374.9 571.6L381.1 575.1L385.5 572.2L392.3 574.2L400.5 576.9L406.0 575.0L414.2 578.3L421.0 573.3L426.4 576.9L434.6 576.1L446.9 572.0L453.2 570.9L460.6 575.5L470.2 576.3L477.0 574.7L485.2 574.7L493.4 576.9L498.9 576.1L507.0 581.0L512.5 584.3L524.8 583.2L537.1 582.3L543.9 583.2L550.8 584.3L554.9 588.4L561.7 585.9L568.5 585.1L576.7 585.6L583.6 583.2L589.0 582.3L594.5 581.0L601.3 584.5L608.1 587.8L617.7 587.0L628.6 587.8L639.6 589.7L653.2 589.2L664.2 590.5L675.1 594.1L683.3 591.9L688.8 590.0L702.4 590.5L716.1 590.5L729.7 589.2L743.4 591.1L749.6 588.7L756.4 588.2L763.2 590.1L772.8 590.1L781.0 587.9L789.2 588.7L798.7 587.4L805.6 585.5L809.7 581.9L816.5 581.1L822.0 582.5L832.9 580.0L841.1 583.8L849.3 581.1L857.5 577.8L863.0 572.3L868.4 570.4L873.9 571.0L879.3 566.1L884.8 562.2L890.3 565.5L895.7 565.0L901.2 569.6L906.7 573.2L913.5 575.1L919.0 572.9L927.2 573.2L934.0 571.5L939.5 575.1L947.7 576.4L955.8 577.0L964.0 580.0L970.9 581.9L976.3 583.8L983.2 581.9L990.0 579.7L995.5 581.9L1005.0 580.5L1013.2 576.4L1024.2 571.8L1031.0 573.7L1037.8 573.7L1043.3 575.6L1051.5 571.5L1058.3 571.0L1062.4 575.9L1072.0 575.1L1082.9 572.3L1089.7 576.4L1099.3 579.2L1107.5 576.7L1113.7 578.4L1121.1 572.2L1129.8 573.0L1137.3 575.2L1144.8 579.7L1154.7 577.2L1164.6 576.4L1172.1 578.4L1184.5 577.7L1195.7 579.7L1206.9 577.7L1216.9 578.4L1231.8 577.2L1241.7 572.7L1251.7 571.7L1264.1 569.2L1272.8 563.5L1279.0 558.5L1284.0 561.0L1289.0 564.8L1293.9 566.5L1301.4 565.5L1306.4 566.0L1311.3 561.8L1316.3 562.3L1322.5 566.0L1331.2 565.5L1337.4 566.5L1342.4 572.7L1351.1 572.2L1358.6 571.5L1368.5 576.4L1376.0 574.7L1385.9 574.2L1392.1 572.7L1395.9 574.7L1402.6 574.7" fill="none" stroke="#46579a" stroke-width="1"/>
<rect x="743.5" y="570.6" width="14.5" height="16.5" rx="4" fill="#3b3d44" stroke="#55575e" stroke-width="0.8"/>
<line x1="749.2" x2="749.2" y1="575.6" y2="582.1" stroke="#b9bbc0" stroke-width="1.2"/>
<line x1="752.4" x2="752.4" y1="575.6" y2="582.1" stroke="#b9bbc0" stroke-width="1.2"/>
<rect x="1394.5" y="571.5" width="14.5" height="16.5" rx="4" fill="#3b3d44" stroke="#55575e" stroke-width="0.8"/>
<line x1="1400.2" x2="1400.2" y1="576.5" y2="583.0" stroke="#b9bbc0" stroke-width="1.2"/>
<line x1="1403.4" x2="1403.4" y1="576.5" y2="583.0" stroke="#b9bbc0" stroke-width="1.2"/>
<rect x="1462" y="544.5" width="2.5" height="23.5" fill="#2e3035"/>
</svg>
<div class="abs" id="title">Dogecoin OI-Weighted Funding Rate</div>
<div class="abs" id="tg"></div><div class="abs" id="tga"></div>
<div class="abs tgt" id="t1" style="left:1120.5px">OI-Weighted</div>
<div class="abs tgt" id="t2" style="left:1239.5px">Volume-Weighted</div>
<div class="abs" id="dd"></div>
<div class="abs tgt" id="t3" style="left:1405px;letter-spacing:-0.3px">8 hour</div>
<svg class="abs" style="left:1451px;top:20px" width="12" height="20" viewBox="0 0 12 20"><path d="M3.1 7.3L6.4 3.7L9.7 7.3M3.1 12.7L6.4 16.3L9.7 12.7" fill="none" stroke="#d8d9db" stroke-width="1.3" stroke-linecap="round" stroke-linejoin="round"/></svg>
<div class="sq" style="left:651px;background:#dfbb5d"></div>
<div class="abs lg" id="l1" style="left:667.5px;letter-spacing:-0.45px">DOGE Price</div>
<div class="sq" style="left:746px;background:#55b39b"></div>
<div class="abs lg" id="l2" style="left:762px;letter-spacing:0.1px">OI-Weighted</div>
<div class="abs" id="pl"></div><div class="abs pt" id="plt" style="left:59.8px;top:332.2px">0.02</div>
<div class="abs" id="pr"></div><div class="abs pt" id="prt" style="left:1410.5px;top:332.5px">0.23</div>
<div class="abs" id="pb"></div><div class="abs pt" id="pbt" style="left:1345px;top:532.3px;letter-spacing:0.02px">30 Sep 2025, 19:00</div>
<div class="abs" id="tip"></div>
<svg width="1464" height="621" viewBox="0 0 1464 621" style="position:absolute;left:0;top:0;will-change:transform">
<line x1="93.5" x2="1397.5" y1="340.5" y2="340.5" stroke="#e0e0e0" stroke-width="1.1" stroke-dasharray="4 2.3"/>
<line x1="1397.6" x2="1397.6" y1="106.2" y2="525" stroke="#b8b8b8" stroke-width="1.1" stroke-dasharray="4 2.3"/>
<circle cx="1397.5" cy="336.2" r="5.4" fill="#dcb85c"/><circle cx="1397.5" cy="336.2" r="3.7" fill="#f4f6fa"/>
<circle cx="1397.5" cy="443.7" r="5.4" fill="#5fb39c"/><circle cx="1397.5" cy="443.7" r="3.6" fill="#f4f7f6"/>
</svg>
<div class="abs tt" id="tp1" style="left:1176px;top:380.5px">30 Sep 2025, 19:00</div>
<div class="dot" style="left:1175.7px;top:417.4px;background:#dcb85c"></div>
<div class="abs tl" id="tp2" style="left:1190.5px;top:413.5px;letter-spacing:-0.25px">DOGE Price</div>
<div class="abs tt" id="tp3" style="right:104.8px;top:413.5px">$0.23</div>
<div class="dot" style="left:1175.7px;top:440.3px;background:#55b39b"></div>
<div class="abs tl" id="tp4" style="left:1190.5px;top:436.8px;letter-spacing:0.45px">OI-Weighted</div>
<div class="abs tt" id="tp5" style="right:104.8px;top:436.8px;letter-spacing:-0.15px">0.0017%</div>
<svg class="abs" style="left:1285px;top:485px" width="27" height="29" viewBox="0 0 27 29"><g fill="#8e9194"><path d="M0.99 7.54C0.92 7.15 1.86 5.67 2.34 5.28C2.82 4.88 4.52 4.30 5.09 4.17C5.66 4.05 7.02 4.57 7.23 4.17C7.45 3.78 6.84 1.17 6.93 0.81C7.01 0.45 7.65 0.90 7.97 1.12C8.29 1.34 9.12 2.64 9.68 2.71C10.24 2.78 12.02 1.78 12.74 1.73C13.45 1.67 15.21 2.29 15.80 2.22C16.38 2.15 17.41 1.30 17.75 1.12C18.09 0.93 18.55 0.61 18.73 0.63C18.91 0.64 19.23 0.82 19.28 1.24C19.33 1.65 18.92 3.80 19.16 4.17C19.39 4.55 20.76 4.30 21.30 4.48C21.83 4.66 23.32 5.28 23.75 5.70C24.17 6.13 25.08 7.79 24.97 8.15C24.86 8.51 23.24 8.77 22.83 8.82C22.41 8.87 21.53 8.26 21.42 8.58C21.31 8.89 21.96 10.81 21.91 11.51C21.86 12.21 21.31 13.97 20.99 14.57C20.67 15.18 19.16 16.25 19.16 16.71C19.16 17.18 20.73 18.15 20.99 18.55C21.26 18.94 21.53 19.79 21.42 20.08C21.31 20.36 20.41 20.85 20.08 20.99C19.74 21.14 18.76 20.98 18.55 21.30C18.33 21.62 18.35 23.14 18.24 23.75C18.13 24.35 17.88 26.11 17.63 26.50C17.38 26.89 16.49 27.07 16.10 27.11C15.71 27.15 14.52 27.05 14.27 26.80C14.02 26.55 14.14 25.25 13.96 24.97C13.78 24.68 12.99 24.36 12.74 24.36C12.49 24.36 11.96 24.68 11.82 24.97C11.68 25.25 11.73 26.54 11.51 26.80C11.30 27.07 10.31 27.27 9.98 27.23C9.66 27.20 8.98 26.91 8.76 26.50C8.55 26.09 8.40 24.28 8.15 23.75C7.90 23.21 6.94 22.30 6.62 21.91C6.30 21.52 5.48 20.74 5.40 20.38C5.31 20.03 5.64 19.17 5.89 18.85C6.14 18.53 7.63 18.06 7.54 17.63C7.45 17.20 5.48 15.83 5.09 15.18C4.70 14.54 4.25 12.87 4.17 12.13C4.10 11.38 4.62 9.18 4.48 8.76C4.34 8.35 3.36 8.72 2.95 8.58C2.54 8.44 1.07 7.92 0.99 7.54Z"/><path d="M4.79 26.62L6.93 24.97L7.60 25.46L5.52 26.87Z"/></g></svg>
<div class="abs" id="cg">coinglass</div>
<svg class="abs" style="left:1315px;top:581px" width="28" height="28" viewBox="0 0 126.61 126.61"><g fill="#dcdde1"><path d="M38.73 53.2L63.3 28.63l24.58 24.58 14.3-14.3L63.3 0 24.43 38.9z"/><path d="M0 63.31l14.3-14.3 14.3 14.3-14.3 14.3z"/><path d="M38.73 73.41L63.3 97.98l24.58-24.58 14.3 14.29L63.3 126.61 24.43 87.72z"/><path d="M98.01 63.31l14.3-14.3 14.3 14.3-14.3 14.3z"/><path d="M77.8 63.3L63.3 48.8 52.59 59.51l-1.24 1.23-2.54 2.54 14.49 14.5 14.5-14.49z"/></g></svg>
<div class="abs" id="wm"><span id="wat" style="font-size:19.4px;position:relative;top:-1.7px">@</span><span id="wku" style="margin-left:5.3px">Kuwaity</span></div>
</body></html>
